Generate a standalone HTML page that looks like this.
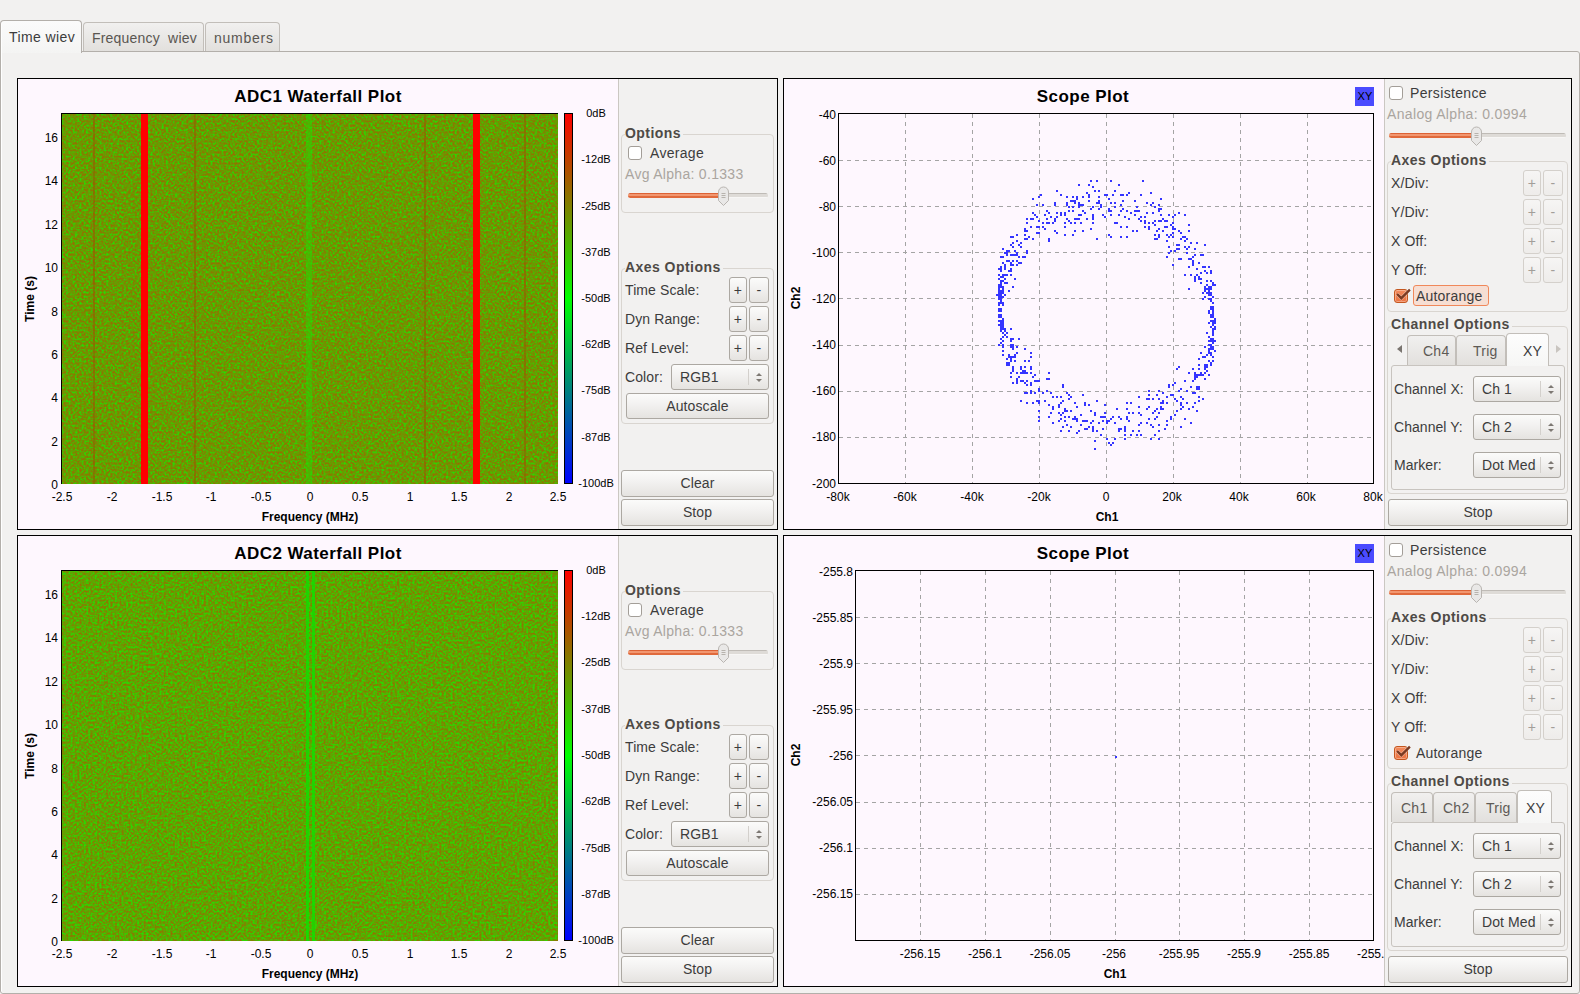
<!DOCTYPE html><html><head><meta charset="utf-8"><title>GNU Radio</title><style>
html,body{margin:0;padding:0;}
body{width:1580px;height:994px;overflow:hidden;position:relative;background:#f2f1f0;font-family:"Liberation Sans",sans-serif;}
.a{position:absolute;box-sizing:border-box;}
.t{position:absolute;white-space:nowrap;font-family:"Liberation Sans",sans-serif;}
.btn{border:1px solid #aca8a2;border-radius:3px;background:linear-gradient(#fbfbfa,#f3f2f1 40%,#e5e3e0);text-align:center;color:#3c3c3c;font-family:"Liberation Sans",sans-serif;white-space:nowrap;}
.btn.dis{border-color:#d4d0cb;color:#a29e99;background:linear-gradient(#f6f5f4,#eeecea);}
.combo{border:1px solid #aca8a2;border-radius:3px;background:linear-gradient(#fbfbfa,#f3f2f1 40%,#e5e3e0);font-family:"Liberation Sans",sans-serif;font-size:14px;color:#3c3c3c;}
.ctext{position:absolute;left:8px;top:0;letter-spacing:0.1px;white-space:nowrap;}
.csep{position:absolute;right:19px;top:4px;bottom:4px;width:1px;background:#d3d0cc;}
.cup{position:absolute;right:6px;top:8px;width:0;height:0;border-left:3.5px solid transparent;border-right:3.5px solid transparent;border-bottom:3.5px solid #7d7873;}
.cdn{position:absolute;right:6px;bottom:7px;width:0;height:0;border-left:3.5px solid transparent;border-right:3.5px solid transparent;border-top:3.5px solid #7d7873;}
.chk{width:14px;height:14px;border:1px solid #a39e98;border-radius:3px;background:#fff;}
.chk.on{background:linear-gradient(#f28a5c,#ec7342);border-color:#c4571f;box-shadow:inset 0 0 0 1px rgba(255,220,200,0.45);}
.tabsel{border:1px solid #c2beb9;border-bottom:none;border-radius:4px 4px 0 0;background:linear-gradient(#fdfdfd,#f6f6f5);}
.tabun{border:1px solid #c2beb9;border-bottom:none;border-radius:4px 4px 0 0;background:linear-gradient(#f1f0ef,#e2e0dd);}
</style></head><body>
<svg width="0" height="0" style="position:absolute"><defs>
<filter id="nz1" x="0" y="0" width="100%" height="100%" color-interpolation-filters="sRGB">
<feTurbulence type="fractalNoise" baseFrequency="0.45" numOctaves="2" seed="7"/>
<feGaussianBlur stdDeviation="0.45"/>
<feComponentTransfer><feFuncR type="table" tableValues="0 0 0.02 0.08 0.22 0.38 0.6 0.88 1 1 1"/></feComponentTransfer>
<feColorMatrix type="matrix" values="-0.431 0 0 0 0.588  0.431 0 0 0 0.431  0 0 0 0 0  0 0 0 0 1"/>
</filter>
<filter id="nz2" x="0" y="0" width="100%" height="100%" color-interpolation-filters="sRGB">
<feTurbulence type="fractalNoise" baseFrequency="0.45" numOctaves="2" seed="11"/>
<feGaussianBlur stdDeviation="0.45"/>
<feComponentTransfer><feFuncR type="table" tableValues="0 0 0.04 0.14 0.3 0.48 0.7 0.92 1 1 1"/></feComponentTransfer>
<feColorMatrix type="matrix" values="-0.431 0 0 0 0.588  0.431 0 0 0 0.431  0 0 0 0 0  0 0 0 0 1"/>
</filter>
</defs></svg>
<div class="a" style="left:0px;top:51px;width:1580px;height:943px;border:1px solid #b3afaa;border-radius:0 3px 3px 3px;background:#f2f1f0;box-shadow:inset 1px 0 0 #fff;"></div>
<div class="a tabsel" style="left:0px;top:20px;width:82px;height:33px;background:linear-gradient(#fbfbfb,#f4f4f3);border-color:#b3afaa;box-shadow:inset 1px 0 0 #fff;"></div>
<div class="a tabun" style="left:83px;top:22px;width:121px;height:29px;"></div>
<div class="a tabun" style="left:205px;top:22px;width:75px;height:29px;"></div>
<div class="t" style="left:9px;top:30px;font-size:14px;line-height:14px;color:#3c3c3c;letter-spacing:0.4px;">Time wiev</div>
<div class="t" style="left:92px;top:31px;font-size:14px;line-height:14px;color:#5a5651;letter-spacing:0.2px;">Frequency&nbsp; wiev</div>
<div class="t" style="left:214px;top:31px;font-size:14px;line-height:14px;color:#5a5651;letter-spacing:0.75px;">numbers</div>
<div class="a" style="left:17px;top:78px;width:761px;height:452px;border:1px solid #000;background:#fef7fe;"></div>
<div class="a" style="left:618px;top:79px;width:159px;height:450px;background:#f2f1f0;border-left:1px solid #cbc7c2;"></div>
<div class="t" style="left:118px;width:400px;text-align:center;top:88px;font-size:17px;line-height:17px;color:#000;font-weight:bold;letter-spacing:0.45px;">ADC1 Waterfall Plot</div>
<svg class="a" style="left:62px;top:114px" width="496" height="370">
<rect x="0" y="0" width="496" height="370" fill="#708700" filter="url(#nz1)"/>
<rect x="31" y="0" height="370" fill="#9a5a00" opacity="0.6" width="2"/>
<rect x="132" y="0" height="370" fill="#9a5a00" opacity="0.6" width="2"/>
<rect x="362" y="0" height="370" fill="#9a5a00" opacity="0.6" width="2"/>
<rect x="462" y="0" height="370" fill="#9a5a00" opacity="0.6" width="2"/>
<rect x="79" y="0" width="7" height="370" fill="#ff0000"/>
<rect x="411" y="0" width="7" height="370" fill="#ff0000"/>
<rect x="244" y="0" width="6" height="370" fill="#28d800" opacity="0.5"/>
</svg>
<div class="a" style="left:61px;top:113px;width:497px;height:1px;background:#000;"></div>
<div class="a" style="left:61px;top:113px;width:1px;height:371px;background:#000;"></div>
<div class="a" style="left:564px;top:113px;width:9px;height:371px;border:1px solid #000;background:linear-gradient(#ff0000,#00ff00 50%,#0000ff);"></div>
<div class="t" style="left:396px;width:400px;text-align:center;top:108px;font-size:11px;line-height:11px;color:#000;letter-spacing:0px;">0dB</div>
<div class="t" style="left:396px;width:400px;text-align:center;top:154px;font-size:11px;line-height:11px;color:#000;letter-spacing:0px;">-12dB</div>
<div class="t" style="left:396px;width:400px;text-align:center;top:201px;font-size:11px;line-height:11px;color:#000;letter-spacing:0px;">-25dB</div>
<div class="t" style="left:396px;width:400px;text-align:center;top:247px;font-size:11px;line-height:11px;color:#000;letter-spacing:0px;">-37dB</div>
<div class="t" style="left:396px;width:400px;text-align:center;top:293px;font-size:11px;line-height:11px;color:#000;letter-spacing:0px;">-50dB</div>
<div class="t" style="left:396px;width:400px;text-align:center;top:339px;font-size:11px;line-height:11px;color:#000;letter-spacing:0px;">-62dB</div>
<div class="t" style="left:396px;width:400px;text-align:center;top:385px;font-size:11px;line-height:11px;color:#000;letter-spacing:0px;">-75dB</div>
<div class="t" style="left:396px;width:400px;text-align:center;top:432px;font-size:11px;line-height:11px;color:#000;letter-spacing:0px;">-87dB</div>
<div class="t" style="left:396px;width:400px;text-align:center;top:478px;font-size:11px;line-height:11px;color:#000;letter-spacing:0px;">-100dB</div>
<div class="t" style="left:-342px;width:400px;text-align:right;top:479px;font-size:12px;line-height:12px;color:#000;letter-spacing:0px;">0</div>
<div class="t" style="left:-342px;width:400px;text-align:right;top:436px;font-size:12px;line-height:12px;color:#000;letter-spacing:0px;">2</div>
<div class="t" style="left:-342px;width:400px;text-align:right;top:392px;font-size:12px;line-height:12px;color:#000;letter-spacing:0px;">4</div>
<div class="t" style="left:-342px;width:400px;text-align:right;top:349px;font-size:12px;line-height:12px;color:#000;letter-spacing:0px;">6</div>
<div class="t" style="left:-342px;width:400px;text-align:right;top:306px;font-size:12px;line-height:12px;color:#000;letter-spacing:0px;">8</div>
<div class="t" style="left:-342px;width:400px;text-align:right;top:262px;font-size:12px;line-height:12px;color:#000;letter-spacing:0px;">10</div>
<div class="t" style="left:-342px;width:400px;text-align:right;top:219px;font-size:12px;line-height:12px;color:#000;letter-spacing:0px;">12</div>
<div class="t" style="left:-342px;width:400px;text-align:right;top:175px;font-size:12px;line-height:12px;color:#000;letter-spacing:0px;">14</div>
<div class="t" style="left:-342px;width:400px;text-align:right;top:132px;font-size:12px;line-height:12px;color:#000;letter-spacing:0px;">16</div>
<div class="t" style="left:-138px;width:400px;text-align:center;top:491px;font-size:12px;line-height:12px;color:#000;letter-spacing:0px;">-2.5</div>
<div class="t" style="left:-88px;width:400px;text-align:center;top:491px;font-size:12px;line-height:12px;color:#000;letter-spacing:0px;">-2</div>
<div class="t" style="left:-38px;width:400px;text-align:center;top:491px;font-size:12px;line-height:12px;color:#000;letter-spacing:0px;">-1.5</div>
<div class="t" style="left:11px;width:400px;text-align:center;top:491px;font-size:12px;line-height:12px;color:#000;letter-spacing:0px;">-1</div>
<div class="t" style="left:61px;width:400px;text-align:center;top:491px;font-size:12px;line-height:12px;color:#000;letter-spacing:0px;">-0.5</div>
<div class="t" style="left:110px;width:400px;text-align:center;top:491px;font-size:12px;line-height:12px;color:#000;letter-spacing:0px;">0</div>
<div class="t" style="left:160px;width:400px;text-align:center;top:491px;font-size:12px;line-height:12px;color:#000;letter-spacing:0px;">0.5</div>
<div class="t" style="left:210px;width:400px;text-align:center;top:491px;font-size:12px;line-height:12px;color:#000;letter-spacing:0px;">1</div>
<div class="t" style="left:259px;width:400px;text-align:center;top:491px;font-size:12px;line-height:12px;color:#000;letter-spacing:0px;">1.5</div>
<div class="t" style="left:309px;width:400px;text-align:center;top:491px;font-size:12px;line-height:12px;color:#000;letter-spacing:0px;">2</div>
<div class="t" style="left:358px;width:400px;text-align:center;top:491px;font-size:12px;line-height:12px;color:#000;letter-spacing:0px;">2.5</div>
<div class="t" style="left:110px;width:400px;text-align:center;top:511px;font-size:12px;line-height:12px;color:#000;font-weight:bold;letter-spacing:0px;">Frequency (MHz)</div>
<div class="t" style="left:-70px;top:292.5px;width:200px;text-align:center;font-size:12px;line-height:12px;font-weight:bold;letter-spacing:0px;transform:rotate(-90deg);color:#000">Time (s)</div>
<div class="a" style="left:621px;top:134px;width:153px;height:79px;border:1px solid #d9d5d0;border-radius:4px;box-sizing:border-box;"></div>
<div class="t" style="left:625px;top:126px;font-size:14px;line-height:14px;color:#4e4a46;font-weight:bold;letter-spacing:0.45px;"><span style="background:#f2f1f0;padding-right:2px">Options</span></div>
<div class="a chk" style="left:628px;top:146px;"></div>
<div class="t" style="left:650px;top:146px;font-size:14px;line-height:14px;color:#3c3c3c;letter-spacing:0.3px;">Average</div>
<div class="t" style="left:625px;top:167px;font-size:14px;line-height:14px;color:#aaa59f;letter-spacing:0.3px;">Avg Alpha: 0.1333</div>
<div class="a" style="left:628px;top:193px;width:140px;height:5px;border-radius:3px;background:linear-gradient(#bfbbb6 0,#bfbbb6 1px,#dedbd7 1px,#dedbd7 4px,#f7f6f5 4px);box-sizing:border-box"></div>
<div class="a" style="left:628px;top:193px;width:94px;height:5px;border-radius:3px;background:linear-gradient(#dc6235 0,#dc6235 1px,#f2966f 1px,#f2966f 3px,#e06a3c 3px);box-sizing:border-box"></div>
<svg class="a" style="left:717px;top:186px" width="14" height="22"><path d="M1.5 6 A5 5 0 0 1 11.5 6 L11.5 14.5 L6.5 19.5 L1.5 14.5 Z" fill="#e9e8e7" stroke="#b9b5b1" stroke-width="1"/><path d="M4.5 7.5 H8.5 M4.5 9.5 H8.5 M4.5 11.5 H8.5" stroke="#a9a49e" stroke-width="0.8"/></svg>
<div class="a" style="left:621px;top:268px;width:153px;height:156px;border:1px solid #d9d5d0;border-radius:4px;box-sizing:border-box;"></div>
<div class="t" style="left:625px;top:260px;font-size:14px;line-height:14px;color:#4e4a46;font-weight:bold;letter-spacing:0.45px;"><span style="background:#f2f1f0;padding-right:2px">Axes Options</span></div>
<div class="t" style="left:625px;top:283px;font-size:14px;line-height:14px;color:#3c3c3c;letter-spacing:0.1px;">Time Scale:</div>
<div class="a btn" style="left:729px;top:277px;width:18px;height:26px;line-height:24px;font-size:14px;letter-spacing:0.1px">+</div>
<div class="a btn" style="left:749px;top:277px;width:20px;height:26px;line-height:24px;font-size:14px;letter-spacing:0.1px">-</div>
<div class="t" style="left:625px;top:312px;font-size:14px;line-height:14px;color:#3c3c3c;letter-spacing:0.1px;">Dyn Range:</div>
<div class="a btn" style="left:729px;top:306px;width:18px;height:26px;line-height:24px;font-size:14px;letter-spacing:0.1px">+</div>
<div class="a btn" style="left:749px;top:306px;width:20px;height:26px;line-height:24px;font-size:14px;letter-spacing:0.1px">-</div>
<div class="t" style="left:625px;top:341px;font-size:14px;line-height:14px;color:#3c3c3c;letter-spacing:0.1px;">Ref Level:</div>
<div class="a btn" style="left:729px;top:335px;width:18px;height:26px;line-height:24px;font-size:14px;letter-spacing:0.1px">+</div>
<div class="a btn" style="left:749px;top:335px;width:20px;height:26px;line-height:24px;font-size:14px;letter-spacing:0.1px">-</div>
<div class="t" style="left:625px;top:370px;font-size:14px;line-height:14px;color:#3c3c3c;letter-spacing:0.1px;">Color:</div>
<div class="a combo" style="left:671px;top:364px;width:98px;height:26px;"><span class="ctext" style="line-height:24px">RGB1</span><div class="csep"></div><div class="cup"></div><div class="cdn"></div></div>
<div class="a btn" style="left:626px;top:393px;width:143px;height:26px;line-height:24px;font-size:14px;letter-spacing:0.1px">Autoscale</div>
<div class="a btn" style="left:621px;top:470px;width:153px;height:27px;line-height:25px;font-size:14px;letter-spacing:0.1px">Clear</div>
<div class="a btn" style="left:621px;top:499px;width:153px;height:27px;line-height:25px;font-size:14px;letter-spacing:0.1px">Stop</div>
<div class="a" style="left:17px;top:535px;width:761px;height:452px;border:1px solid #000;background:#fef7fe;"></div>
<div class="a" style="left:618px;top:536px;width:159px;height:450px;background:#f2f1f0;border-left:1px solid #cbc7c2;"></div>
<div class="t" style="left:118px;width:400px;text-align:center;top:545px;font-size:17px;line-height:17px;color:#000;font-weight:bold;letter-spacing:0.45px;">ADC2 Waterfall Plot</div>
<svg class="a" style="left:62px;top:571px" width="496" height="370">
<rect x="0" y="0" width="496" height="370" fill="#60a000" filter="url(#nz2)"/>
<rect x="244" y="0" width="3" height="370" fill="#10e000" opacity="0.8"/>
<rect x="250" y="0" width="3" height="370" fill="#10e000" opacity="0.8"/>
</svg>
<div class="a" style="left:61px;top:570px;width:497px;height:1px;background:#000;"></div>
<div class="a" style="left:61px;top:570px;width:1px;height:371px;background:#000;"></div>
<div class="a" style="left:564px;top:570px;width:9px;height:371px;border:1px solid #000;background:linear-gradient(#ff0000,#00ff00 50%,#0000ff);"></div>
<div class="t" style="left:396px;width:400px;text-align:center;top:565px;font-size:11px;line-height:11px;color:#000;letter-spacing:0px;">0dB</div>
<div class="t" style="left:396px;width:400px;text-align:center;top:611px;font-size:11px;line-height:11px;color:#000;letter-spacing:0px;">-12dB</div>
<div class="t" style="left:396px;width:400px;text-align:center;top:657px;font-size:11px;line-height:11px;color:#000;letter-spacing:0px;">-25dB</div>
<div class="t" style="left:396px;width:400px;text-align:center;top:704px;font-size:11px;line-height:11px;color:#000;letter-spacing:0px;">-37dB</div>
<div class="t" style="left:396px;width:400px;text-align:center;top:750px;font-size:11px;line-height:11px;color:#000;letter-spacing:0px;">-50dB</div>
<div class="t" style="left:396px;width:400px;text-align:center;top:796px;font-size:11px;line-height:11px;color:#000;letter-spacing:0px;">-62dB</div>
<div class="t" style="left:396px;width:400px;text-align:center;top:843px;font-size:11px;line-height:11px;color:#000;letter-spacing:0px;">-75dB</div>
<div class="t" style="left:396px;width:400px;text-align:center;top:889px;font-size:11px;line-height:11px;color:#000;letter-spacing:0px;">-87dB</div>
<div class="t" style="left:396px;width:400px;text-align:center;top:935px;font-size:11px;line-height:11px;color:#000;letter-spacing:0px;">-100dB</div>
<div class="t" style="left:-342px;width:400px;text-align:right;top:936px;font-size:12px;line-height:12px;color:#000;letter-spacing:0px;">0</div>
<div class="t" style="left:-342px;width:400px;text-align:right;top:893px;font-size:12px;line-height:12px;color:#000;letter-spacing:0px;">2</div>
<div class="t" style="left:-342px;width:400px;text-align:right;top:849px;font-size:12px;line-height:12px;color:#000;letter-spacing:0px;">4</div>
<div class="t" style="left:-342px;width:400px;text-align:right;top:806px;font-size:12px;line-height:12px;color:#000;letter-spacing:0px;">6</div>
<div class="t" style="left:-342px;width:400px;text-align:right;top:763px;font-size:12px;line-height:12px;color:#000;letter-spacing:0px;">8</div>
<div class="t" style="left:-342px;width:400px;text-align:right;top:719px;font-size:12px;line-height:12px;color:#000;letter-spacing:0px;">10</div>
<div class="t" style="left:-342px;width:400px;text-align:right;top:676px;font-size:12px;line-height:12px;color:#000;letter-spacing:0px;">12</div>
<div class="t" style="left:-342px;width:400px;text-align:right;top:632px;font-size:12px;line-height:12px;color:#000;letter-spacing:0px;">14</div>
<div class="t" style="left:-342px;width:400px;text-align:right;top:589px;font-size:12px;line-height:12px;color:#000;letter-spacing:0px;">16</div>
<div class="t" style="left:-138px;width:400px;text-align:center;top:948px;font-size:12px;line-height:12px;color:#000;letter-spacing:0px;">-2.5</div>
<div class="t" style="left:-88px;width:400px;text-align:center;top:948px;font-size:12px;line-height:12px;color:#000;letter-spacing:0px;">-2</div>
<div class="t" style="left:-38px;width:400px;text-align:center;top:948px;font-size:12px;line-height:12px;color:#000;letter-spacing:0px;">-1.5</div>
<div class="t" style="left:11px;width:400px;text-align:center;top:948px;font-size:12px;line-height:12px;color:#000;letter-spacing:0px;">-1</div>
<div class="t" style="left:61px;width:400px;text-align:center;top:948px;font-size:12px;line-height:12px;color:#000;letter-spacing:0px;">-0.5</div>
<div class="t" style="left:110px;width:400px;text-align:center;top:948px;font-size:12px;line-height:12px;color:#000;letter-spacing:0px;">0</div>
<div class="t" style="left:160px;width:400px;text-align:center;top:948px;font-size:12px;line-height:12px;color:#000;letter-spacing:0px;">0.5</div>
<div class="t" style="left:210px;width:400px;text-align:center;top:948px;font-size:12px;line-height:12px;color:#000;letter-spacing:0px;">1</div>
<div class="t" style="left:259px;width:400px;text-align:center;top:948px;font-size:12px;line-height:12px;color:#000;letter-spacing:0px;">1.5</div>
<div class="t" style="left:309px;width:400px;text-align:center;top:948px;font-size:12px;line-height:12px;color:#000;letter-spacing:0px;">2</div>
<div class="t" style="left:358px;width:400px;text-align:center;top:948px;font-size:12px;line-height:12px;color:#000;letter-spacing:0px;">2.5</div>
<div class="t" style="left:110px;width:400px;text-align:center;top:968px;font-size:12px;line-height:12px;color:#000;font-weight:bold;letter-spacing:0px;">Frequency (MHz)</div>
<div class="t" style="left:-70px;top:749.5px;width:200px;text-align:center;font-size:12px;line-height:12px;font-weight:bold;letter-spacing:0px;transform:rotate(-90deg);color:#000">Time (s)</div>
<div class="a" style="left:621px;top:591px;width:153px;height:79px;border:1px solid #d9d5d0;border-radius:4px;box-sizing:border-box;"></div>
<div class="t" style="left:625px;top:583px;font-size:14px;line-height:14px;color:#4e4a46;font-weight:bold;letter-spacing:0.45px;"><span style="background:#f2f1f0;padding-right:2px">Options</span></div>
<div class="a chk" style="left:628px;top:603px;"></div>
<div class="t" style="left:650px;top:603px;font-size:14px;line-height:14px;color:#3c3c3c;letter-spacing:0.3px;">Average</div>
<div class="t" style="left:625px;top:624px;font-size:14px;line-height:14px;color:#aaa59f;letter-spacing:0.3px;">Avg Alpha: 0.1333</div>
<div class="a" style="left:628px;top:650px;width:140px;height:5px;border-radius:3px;background:linear-gradient(#bfbbb6 0,#bfbbb6 1px,#dedbd7 1px,#dedbd7 4px,#f7f6f5 4px);box-sizing:border-box"></div>
<div class="a" style="left:628px;top:650px;width:94px;height:5px;border-radius:3px;background:linear-gradient(#dc6235 0,#dc6235 1px,#f2966f 1px,#f2966f 3px,#e06a3c 3px);box-sizing:border-box"></div>
<svg class="a" style="left:717px;top:643px" width="14" height="22"><path d="M1.5 6 A5 5 0 0 1 11.5 6 L11.5 14.5 L6.5 19.5 L1.5 14.5 Z" fill="#e9e8e7" stroke="#b9b5b1" stroke-width="1"/><path d="M4.5 7.5 H8.5 M4.5 9.5 H8.5 M4.5 11.5 H8.5" stroke="#a9a49e" stroke-width="0.8"/></svg>
<div class="a" style="left:621px;top:725px;width:153px;height:156px;border:1px solid #d9d5d0;border-radius:4px;box-sizing:border-box;"></div>
<div class="t" style="left:625px;top:717px;font-size:14px;line-height:14px;color:#4e4a46;font-weight:bold;letter-spacing:0.45px;"><span style="background:#f2f1f0;padding-right:2px">Axes Options</span></div>
<div class="t" style="left:625px;top:740px;font-size:14px;line-height:14px;color:#3c3c3c;letter-spacing:0.1px;">Time Scale:</div>
<div class="a btn" style="left:729px;top:734px;width:18px;height:26px;line-height:24px;font-size:14px;letter-spacing:0.1px">+</div>
<div class="a btn" style="left:749px;top:734px;width:20px;height:26px;line-height:24px;font-size:14px;letter-spacing:0.1px">-</div>
<div class="t" style="left:625px;top:769px;font-size:14px;line-height:14px;color:#3c3c3c;letter-spacing:0.1px;">Dyn Range:</div>
<div class="a btn" style="left:729px;top:763px;width:18px;height:26px;line-height:24px;font-size:14px;letter-spacing:0.1px">+</div>
<div class="a btn" style="left:749px;top:763px;width:20px;height:26px;line-height:24px;font-size:14px;letter-spacing:0.1px">-</div>
<div class="t" style="left:625px;top:798px;font-size:14px;line-height:14px;color:#3c3c3c;letter-spacing:0.1px;">Ref Level:</div>
<div class="a btn" style="left:729px;top:792px;width:18px;height:26px;line-height:24px;font-size:14px;letter-spacing:0.1px">+</div>
<div class="a btn" style="left:749px;top:792px;width:20px;height:26px;line-height:24px;font-size:14px;letter-spacing:0.1px">-</div>
<div class="t" style="left:625px;top:827px;font-size:14px;line-height:14px;color:#3c3c3c;letter-spacing:0.1px;">Color:</div>
<div class="a combo" style="left:671px;top:821px;width:98px;height:26px;"><span class="ctext" style="line-height:24px">RGB1</span><div class="csep"></div><div class="cup"></div><div class="cdn"></div></div>
<div class="a btn" style="left:626px;top:850px;width:143px;height:26px;line-height:24px;font-size:14px;letter-spacing:0.1px">Autoscale</div>
<div class="a btn" style="left:621px;top:927px;width:153px;height:27px;line-height:25px;font-size:14px;letter-spacing:0.1px">Clear</div>
<div class="a btn" style="left:621px;top:956px;width:153px;height:27px;line-height:25px;font-size:14px;letter-spacing:0.1px">Stop</div>
<div class="a" style="left:783px;top:78px;width:789px;height:452px;border:1px solid #000;background:#fef7fe;"></div>
<div class="t" style="left:883px;width:400px;text-align:center;top:88px;font-size:17px;line-height:17px;color:#000;font-weight:bold;letter-spacing:0.45px;">Scope Plot</div>
<div class="a" style="left:1355px;top:87px;width:19px;height:19px;background:#4b4bff;"></div>
<div class="t" style="left:1165px;width:400px;text-align:center;top:91px;font-size:11px;line-height:11px;color:#000;letter-spacing:0.2px;">XY</div>
<svg class="a" style="left:838px;top:113px" width="536" height="371"><line x1="67.5" y1="1" x2="67.5" y2="370" stroke="#a4a4a4" stroke-width="1" stroke-dasharray="4 4"/><line x1="134.5" y1="1" x2="134.5" y2="370" stroke="#a4a4a4" stroke-width="1" stroke-dasharray="4 4"/><line x1="201.5" y1="1" x2="201.5" y2="370" stroke="#a4a4a4" stroke-width="1" stroke-dasharray="4 4"/><line x1="268.5" y1="1" x2="268.5" y2="370" stroke="#a4a4a4" stroke-width="1" stroke-dasharray="4 4"/><line x1="335.5" y1="1" x2="335.5" y2="370" stroke="#a4a4a4" stroke-width="1" stroke-dasharray="4 4"/><line x1="402.5" y1="1" x2="402.5" y2="370" stroke="#a4a4a4" stroke-width="1" stroke-dasharray="4 4"/><line x1="469.5" y1="1" x2="469.5" y2="370" stroke="#a4a4a4" stroke-width="1" stroke-dasharray="4 4"/><line x1="1" y1="47.5" x2="535" y2="47.5" stroke="#a4a4a4" stroke-width="1" stroke-dasharray="4 4"/><line x1="1" y1="93.5" x2="535" y2="93.5" stroke="#a4a4a4" stroke-width="1" stroke-dasharray="4 4"/><line x1="1" y1="139.5" x2="535" y2="139.5" stroke="#a4a4a4" stroke-width="1" stroke-dasharray="4 4"/><line x1="1" y1="185.5" x2="535" y2="185.5" stroke="#a4a4a4" stroke-width="1" stroke-dasharray="4 4"/><line x1="1" y1="232.5" x2="535" y2="232.5" stroke="#a4a4a4" stroke-width="1" stroke-dasharray="4 4"/><line x1="1" y1="278.5" x2="535" y2="278.5" stroke="#a4a4a4" stroke-width="1" stroke-dasharray="4 4"/><line x1="1" y1="324.5" x2="535" y2="324.5" stroke="#a4a4a4" stroke-width="1" stroke-dasharray="4 4"/><rect x="0.5" y="0.5" width="535" height="370" fill="none" stroke="#000" stroke-width="1"/><rect x="190" y="247" width="2" height="2" fill="#3535ff"/><rect x="368" y="219" width="2" height="2" fill="#3535ff"/><rect x="370" y="197" width="2" height="2" fill="#3535ff"/><rect x="204" y="279" width="2" height="2" fill="#3535ff"/><rect x="162" y="187" width="2" height="2" fill="#3535ff"/><rect x="172" y="243" width="2" height="2" fill="#3535ff"/><rect x="250" y="83" width="2" height="2" fill="#3535ff"/><rect x="326" y="107" width="2" height="2" fill="#3535ff"/><rect x="188" y="267" width="2" height="2" fill="#3535ff"/><rect x="342" y="295" width="2" height="2" fill="#3535ff"/><rect x="374" y="215" width="2" height="2" fill="#3535ff"/><rect x="370" y="231" width="2" height="2" fill="#3535ff"/><rect x="298" y="93" width="2" height="2" fill="#3535ff"/><rect x="372" y="225" width="2" height="2" fill="#3535ff"/><rect x="198" y="119" width="2" height="2" fill="#3535ff"/><rect x="366" y="183" width="2" height="2" fill="#3535ff"/><rect x="374" y="197" width="2" height="2" fill="#3535ff"/><rect x="228" y="83" width="2" height="2" fill="#3535ff"/><rect x="222" y="101" width="2" height="2" fill="#3535ff"/><rect x="368" y="171" width="2" height="2" fill="#3535ff"/><rect x="268" y="307" width="2" height="2" fill="#3535ff"/><rect x="292" y="321" width="2" height="2" fill="#3535ff"/><rect x="374" y="207" width="2" height="2" fill="#3535ff"/><rect x="370" y="261" width="2" height="2" fill="#3535ff"/><rect x="366" y="251" width="2" height="2" fill="#3535ff"/><rect x="200" y="107" width="2" height="2" fill="#3535ff"/><rect x="350" y="117" width="2" height="2" fill="#3535ff"/><rect x="338" y="297" width="2" height="2" fill="#3535ff"/><rect x="356" y="165" width="2" height="2" fill="#3535ff"/><rect x="360" y="287" width="2" height="2" fill="#3535ff"/><rect x="164" y="233" width="2" height="2" fill="#3535ff"/><rect x="316" y="111" width="2" height="2" fill="#3535ff"/><rect x="228" y="297" width="2" height="2" fill="#3535ff"/><rect x="370" y="175" width="2" height="2" fill="#3535ff"/><rect x="178" y="151" width="2" height="2" fill="#3535ff"/><rect x="316" y="305" width="2" height="2" fill="#3535ff"/><rect x="368" y="171" width="2" height="2" fill="#3535ff"/><rect x="160" y="181" width="2" height="2" fill="#3535ff"/><rect x="256" y="301" width="2" height="2" fill="#3535ff"/><rect x="294" y="317" width="2" height="2" fill="#3535ff"/><rect x="332" y="111" width="2" height="2" fill="#3535ff"/><rect x="168" y="161" width="2" height="2" fill="#3535ff"/><rect x="372" y="231" width="2" height="2" fill="#3535ff"/><rect x="252" y="309" width="2" height="2" fill="#3535ff"/><rect x="180" y="143" width="2" height="2" fill="#3535ff"/><rect x="376" y="213" width="2" height="2" fill="#3535ff"/><rect x="160" y="197" width="2" height="2" fill="#3535ff"/><rect x="252" y="67" width="2" height="2" fill="#3535ff"/><rect x="198" y="91" width="2" height="2" fill="#3535ff"/><rect x="230" y="281" width="2" height="2" fill="#3535ff"/><rect x="198" y="103" width="2" height="2" fill="#3535ff"/><rect x="162" y="163" width="2" height="2" fill="#3535ff"/><rect x="240" y="89" width="2" height="2" fill="#3535ff"/><rect x="176" y="247" width="2" height="2" fill="#3535ff"/><rect x="266" y="81" width="2" height="2" fill="#3535ff"/><rect x="310" y="285" width="2" height="2" fill="#3535ff"/><rect x="204" y="91" width="2" height="2" fill="#3535ff"/><rect x="316" y="321" width="2" height="2" fill="#3535ff"/><rect x="340" y="253" width="2" height="2" fill="#3535ff"/><rect x="370" y="237" width="2" height="2" fill="#3535ff"/><rect x="322" y="85" width="2" height="2" fill="#3535ff"/><rect x="162" y="157" width="2" height="2" fill="#3535ff"/><rect x="256" y="327" width="2" height="2" fill="#3535ff"/><rect x="174" y="233" width="2" height="2" fill="#3535ff"/><rect x="192" y="253" width="2" height="2" fill="#3535ff"/><rect x="248" y="307" width="2" height="2" fill="#3535ff"/><rect x="168" y="147" width="2" height="2" fill="#3535ff"/><rect x="226" y="295" width="2" height="2" fill="#3535ff"/><rect x="162" y="177" width="2" height="2" fill="#3535ff"/><rect x="338" y="135" width="2" height="2" fill="#3535ff"/><rect x="306" y="107" width="2" height="2" fill="#3535ff"/><rect x="188" y="109" width="2" height="2" fill="#3535ff"/><rect x="276" y="93" width="2" height="2" fill="#3535ff"/><rect x="178" y="147" width="2" height="2" fill="#3535ff"/><rect x="348" y="125" width="2" height="2" fill="#3535ff"/><rect x="372" y="181" width="2" height="2" fill="#3535ff"/><rect x="164" y="237" width="2" height="2" fill="#3535ff"/><rect x="372" y="225" width="2" height="2" fill="#3535ff"/><rect x="308" y="295" width="2" height="2" fill="#3535ff"/><rect x="334" y="113" width="2" height="2" fill="#3535ff"/><rect x="372" y="235" width="2" height="2" fill="#3535ff"/><rect x="204" y="109" width="2" height="2" fill="#3535ff"/><rect x="350" y="133" width="2" height="2" fill="#3535ff"/><rect x="334" y="103" width="2" height="2" fill="#3535ff"/><rect x="190" y="123" width="2" height="2" fill="#3535ff"/><rect x="240" y="93" width="2" height="2" fill="#3535ff"/><rect x="372" y="227" width="2" height="2" fill="#3535ff"/><rect x="262" y="91" width="2" height="2" fill="#3535ff"/><rect x="174" y="173" width="2" height="2" fill="#3535ff"/><rect x="160" y="201" width="2" height="2" fill="#3535ff"/><rect x="344" y="123" width="2" height="2" fill="#3535ff"/><rect x="240" y="71" width="2" height="2" fill="#3535ff"/><rect x="374" y="199" width="2" height="2" fill="#3535ff"/><rect x="366" y="243" width="2" height="2" fill="#3535ff"/><rect x="258" y="125" width="2" height="2" fill="#3535ff"/><rect x="238" y="85" width="2" height="2" fill="#3535ff"/><rect x="200" y="267" width="2" height="2" fill="#3535ff"/><rect x="346" y="123" width="2" height="2" fill="#3535ff"/><rect x="162" y="225" width="2" height="2" fill="#3535ff"/><rect x="162" y="215" width="2" height="2" fill="#3535ff"/><rect x="264" y="307" width="2" height="2" fill="#3535ff"/><rect x="264" y="101" width="2" height="2" fill="#3535ff"/><rect x="348" y="277" width="2" height="2" fill="#3535ff"/><rect x="286" y="317" width="2" height="2" fill="#3535ff"/><rect x="238" y="293" width="2" height="2" fill="#3535ff"/><rect x="358" y="275" width="2" height="2" fill="#3535ff"/><rect x="332" y="303" width="2" height="2" fill="#3535ff"/><rect x="320" y="311" width="2" height="2" fill="#3535ff"/><rect x="230" y="303" width="2" height="2" fill="#3535ff"/><rect x="288" y="305" width="2" height="2" fill="#3535ff"/><rect x="160" y="173" width="2" height="2" fill="#3535ff"/><rect x="216" y="117" width="2" height="2" fill="#3535ff"/><rect x="308" y="309" width="2" height="2" fill="#3535ff"/><rect x="314" y="285" width="2" height="2" fill="#3535ff"/><rect x="372" y="157" width="2" height="2" fill="#3535ff"/><rect x="374" y="207" width="2" height="2" fill="#3535ff"/><rect x="326" y="315" width="2" height="2" fill="#3535ff"/><rect x="370" y="235" width="2" height="2" fill="#3535ff"/><rect x="240" y="91" width="2" height="2" fill="#3535ff"/><rect x="184" y="267" width="2" height="2" fill="#3535ff"/><rect x="192" y="271" width="2" height="2" fill="#3535ff"/><rect x="190" y="123" width="2" height="2" fill="#3535ff"/><rect x="172" y="215" width="2" height="2" fill="#3535ff"/><rect x="338" y="131" width="2" height="2" fill="#3535ff"/><rect x="178" y="259" width="2" height="2" fill="#3535ff"/><rect x="194" y="125" width="2" height="2" fill="#3535ff"/><rect x="328" y="107" width="2" height="2" fill="#3535ff"/><rect x="356" y="261" width="2" height="2" fill="#3535ff"/><rect x="258" y="89" width="2" height="2" fill="#3535ff"/><rect x="268" y="309" width="2" height="2" fill="#3535ff"/><rect x="276" y="109" width="2" height="2" fill="#3535ff"/><rect x="314" y="89" width="2" height="2" fill="#3535ff"/><rect x="360" y="149" width="2" height="2" fill="#3535ff"/><rect x="342" y="125" width="2" height="2" fill="#3535ff"/><rect x="344" y="285" width="2" height="2" fill="#3535ff"/><rect x="300" y="311" width="2" height="2" fill="#3535ff"/><rect x="370" y="199" width="2" height="2" fill="#3535ff"/><rect x="222" y="301" width="2" height="2" fill="#3535ff"/><rect x="372" y="207" width="2" height="2" fill="#3535ff"/><rect x="336" y="115" width="2" height="2" fill="#3535ff"/><rect x="276" y="109" width="2" height="2" fill="#3535ff"/><rect x="204" y="113" width="2" height="2" fill="#3535ff"/><rect x="318" y="281" width="2" height="2" fill="#3535ff"/><rect x="170" y="137" width="2" height="2" fill="#3535ff"/><rect x="176" y="243" width="2" height="2" fill="#3535ff"/><rect x="182" y="129" width="2" height="2" fill="#3535ff"/><rect x="302" y="107" width="2" height="2" fill="#3535ff"/><rect x="162" y="179" width="2" height="2" fill="#3535ff"/><rect x="164" y="161" width="2" height="2" fill="#3535ff"/><rect x="170" y="147" width="2" height="2" fill="#3535ff"/><rect x="328" y="127" width="2" height="2" fill="#3535ff"/><rect x="188" y="117" width="2" height="2" fill="#3535ff"/><rect x="264" y="101" width="2" height="2" fill="#3535ff"/><rect x="242" y="109" width="2" height="2" fill="#3535ff"/><rect x="374" y="183" width="2" height="2" fill="#3535ff"/><rect x="366" y="233" width="2" height="2" fill="#3535ff"/><rect x="162" y="171" width="2" height="2" fill="#3535ff"/><rect x="214" y="309" width="2" height="2" fill="#3535ff"/><rect x="254" y="315" width="2" height="2" fill="#3535ff"/><rect x="374" y="199" width="2" height="2" fill="#3535ff"/><rect x="182" y="129" width="2" height="2" fill="#3535ff"/><rect x="226" y="99" width="2" height="2" fill="#3535ff"/><rect x="256" y="299" width="2" height="2" fill="#3535ff"/><rect x="272" y="67" width="2" height="2" fill="#3535ff"/><rect x="200" y="297" width="2" height="2" fill="#3535ff"/><rect x="376" y="215" width="2" height="2" fill="#3535ff"/><rect x="178" y="141" width="2" height="2" fill="#3535ff"/><rect x="374" y="215" width="2" height="2" fill="#3535ff"/><rect x="358" y="161" width="2" height="2" fill="#3535ff"/><rect x="160" y="185" width="2" height="2" fill="#3535ff"/><rect x="272" y="97" width="2" height="2" fill="#3535ff"/><rect x="366" y="183" width="2" height="2" fill="#3535ff"/><rect x="230" y="97" width="2" height="2" fill="#3535ff"/><rect x="374" y="243" width="2" height="2" fill="#3535ff"/><rect x="180" y="131" width="2" height="2" fill="#3535ff"/><rect x="226" y="109" width="2" height="2" fill="#3535ff"/><rect x="360" y="245" width="2" height="2" fill="#3535ff"/><rect x="292" y="99" width="2" height="2" fill="#3535ff"/><rect x="160" y="177" width="2" height="2" fill="#3535ff"/><rect x="192" y="243" width="2" height="2" fill="#3535ff"/><rect x="228" y="105" width="2" height="2" fill="#3535ff"/><rect x="286" y="103" width="2" height="2" fill="#3535ff"/><rect x="358" y="129" width="2" height="2" fill="#3535ff"/><rect x="226" y="101" width="2" height="2" fill="#3535ff"/><rect x="272" y="101" width="2" height="2" fill="#3535ff"/><rect x="172" y="247" width="2" height="2" fill="#3535ff"/><rect x="236" y="303" width="2" height="2" fill="#3535ff"/><rect x="244" y="97" width="2" height="2" fill="#3535ff"/><rect x="172" y="161" width="2" height="2" fill="#3535ff"/><rect x="168" y="219" width="2" height="2" fill="#3535ff"/><rect x="274" y="303" width="2" height="2" fill="#3535ff"/><rect x="310" y="277" width="2" height="2" fill="#3535ff"/><rect x="252" y="297" width="2" height="2" fill="#3535ff"/><rect x="308" y="309" width="2" height="2" fill="#3535ff"/><rect x="366" y="175" width="2" height="2" fill="#3535ff"/><rect x="220" y="299" width="2" height="2" fill="#3535ff"/><rect x="276" y="309" width="2" height="2" fill="#3535ff"/><rect x="370" y="185" width="2" height="2" fill="#3535ff"/><rect x="336" y="285" width="2" height="2" fill="#3535ff"/><rect x="280" y="101" width="2" height="2" fill="#3535ff"/><rect x="218" y="103" width="2" height="2" fill="#3535ff"/><rect x="318" y="295" width="2" height="2" fill="#3535ff"/><rect x="164" y="231" width="2" height="2" fill="#3535ff"/><rect x="168" y="147" width="2" height="2" fill="#3535ff"/><rect x="346" y="161" width="2" height="2" fill="#3535ff"/><rect x="162" y="171" width="2" height="2" fill="#3535ff"/><rect x="280" y="303" width="2" height="2" fill="#3535ff"/><rect x="372" y="227" width="2" height="2" fill="#3535ff"/><rect x="310" y="305" width="2" height="2" fill="#3535ff"/><rect x="374" y="229" width="2" height="2" fill="#3535ff"/><rect x="162" y="171" width="2" height="2" fill="#3535ff"/><rect x="290" y="105" width="2" height="2" fill="#3535ff"/><rect x="168" y="251" width="2" height="2" fill="#3535ff"/><rect x="272" y="101" width="2" height="2" fill="#3535ff"/><rect x="374" y="201" width="2" height="2" fill="#3535ff"/><rect x="188" y="271" width="2" height="2" fill="#3535ff"/><rect x="320" y="299" width="2" height="2" fill="#3535ff"/><rect x="320" y="123" width="2" height="2" fill="#3535ff"/><rect x="354" y="293" width="2" height="2" fill="#3535ff"/><rect x="218" y="77" width="2" height="2" fill="#3535ff"/><rect x="192" y="259" width="2" height="2" fill="#3535ff"/><rect x="372" y="201" width="2" height="2" fill="#3535ff"/><rect x="310" y="113" width="2" height="2" fill="#3535ff"/><rect x="372" y="203" width="2" height="2" fill="#3535ff"/><rect x="162" y="163" width="2" height="2" fill="#3535ff"/><rect x="374" y="195" width="2" height="2" fill="#3535ff"/><rect x="230" y="285" width="2" height="2" fill="#3535ff"/><rect x="298" y="321" width="2" height="2" fill="#3535ff"/><rect x="220" y="293" width="2" height="2" fill="#3535ff"/><rect x="362" y="165" width="2" height="2" fill="#3535ff"/><rect x="174" y="225" width="2" height="2" fill="#3535ff"/><rect x="230" y="93" width="2" height="2" fill="#3535ff"/><rect x="246" y="315" width="2" height="2" fill="#3535ff"/><rect x="218" y="283" width="2" height="2" fill="#3535ff"/><rect x="228" y="279" width="2" height="2" fill="#3535ff"/><rect x="186" y="279" width="2" height="2" fill="#3535ff"/><rect x="352" y="309" width="2" height="2" fill="#3535ff"/><rect x="164" y="223" width="2" height="2" fill="#3535ff"/><rect x="186" y="143" width="2" height="2" fill="#3535ff"/><rect x="356" y="263" width="2" height="2" fill="#3535ff"/><rect x="188" y="137" width="2" height="2" fill="#3535ff"/><rect x="166" y="215" width="2" height="2" fill="#3535ff"/><rect x="348" y="289" width="2" height="2" fill="#3535ff"/><rect x="254" y="73" width="2" height="2" fill="#3535ff"/><rect x="320" y="95" width="2" height="2" fill="#3535ff"/><rect x="286" y="103" width="2" height="2" fill="#3535ff"/><rect x="320" y="285" width="2" height="2" fill="#3535ff"/><rect x="174" y="147" width="2" height="2" fill="#3535ff"/><rect x="356" y="279" width="2" height="2" fill="#3535ff"/><rect x="184" y="259" width="2" height="2" fill="#3535ff"/><rect x="374" y="201" width="2" height="2" fill="#3535ff"/><rect x="182" y="267" width="2" height="2" fill="#3535ff"/><rect x="178" y="239" width="2" height="2" fill="#3535ff"/><rect x="254" y="313" width="2" height="2" fill="#3535ff"/><rect x="322" y="295" width="2" height="2" fill="#3535ff"/><rect x="330" y="271" width="2" height="2" fill="#3535ff"/><rect x="280" y="71" width="2" height="2" fill="#3535ff"/><rect x="162" y="181" width="2" height="2" fill="#3535ff"/><rect x="328" y="121" width="2" height="2" fill="#3535ff"/><rect x="188" y="279" width="2" height="2" fill="#3535ff"/><rect x="258" y="287" width="2" height="2" fill="#3535ff"/><rect x="246" y="289" width="2" height="2" fill="#3535ff"/><rect x="192" y="269" width="2" height="2" fill="#3535ff"/><rect x="354" y="147" width="2" height="2" fill="#3535ff"/><rect x="190" y="123" width="2" height="2" fill="#3535ff"/><rect x="264" y="315" width="2" height="2" fill="#3535ff"/><rect x="164" y="227" width="2" height="2" fill="#3535ff"/><rect x="178" y="269" width="2" height="2" fill="#3535ff"/><rect x="162" y="181" width="2" height="2" fill="#3535ff"/><rect x="364" y="141" width="2" height="2" fill="#3535ff"/><rect x="238" y="105" width="2" height="2" fill="#3535ff"/><rect x="202" y="81" width="2" height="2" fill="#3535ff"/><rect x="188" y="137" width="2" height="2" fill="#3535ff"/><rect x="232" y="283" width="2" height="2" fill="#3535ff"/><rect x="236" y="117" width="2" height="2" fill="#3535ff"/><rect x="162" y="209" width="2" height="2" fill="#3535ff"/><rect x="276" y="89" width="2" height="2" fill="#3535ff"/><rect x="254" y="101" width="2" height="2" fill="#3535ff"/><rect x="374" y="217" width="2" height="2" fill="#3535ff"/><rect x="366" y="259" width="2" height="2" fill="#3535ff"/><rect x="310" y="305" width="2" height="2" fill="#3535ff"/><rect x="200" y="113" width="2" height="2" fill="#3535ff"/><rect x="164" y="175" width="2" height="2" fill="#3535ff"/><rect x="370" y="209" width="2" height="2" fill="#3535ff"/><rect x="166" y="155" width="2" height="2" fill="#3535ff"/><rect x="250" y="87" width="2" height="2" fill="#3535ff"/><rect x="162" y="201" width="2" height="2" fill="#3535ff"/><rect x="286" y="315" width="2" height="2" fill="#3535ff"/><rect x="354" y="255" width="2" height="2" fill="#3535ff"/><rect x="374" y="189" width="2" height="2" fill="#3535ff"/><rect x="178" y="121" width="2" height="2" fill="#3535ff"/><rect x="358" y="297" width="2" height="2" fill="#3535ff"/><rect x="272" y="305" width="2" height="2" fill="#3535ff"/><rect x="286" y="325" width="2" height="2" fill="#3535ff"/><rect x="374" y="227" width="2" height="2" fill="#3535ff"/><rect x="252" y="95" width="2" height="2" fill="#3535ff"/><rect x="214" y="295" width="2" height="2" fill="#3535ff"/><rect x="166" y="169" width="2" height="2" fill="#3535ff"/><rect x="354" y="267" width="2" height="2" fill="#3535ff"/><rect x="374" y="169" width="2" height="2" fill="#3535ff"/><rect x="180" y="263" width="2" height="2" fill="#3535ff"/><rect x="362" y="259" width="2" height="2" fill="#3535ff"/><rect x="310" y="109" width="2" height="2" fill="#3535ff"/><rect x="268" y="325" width="2" height="2" fill="#3535ff"/><rect x="326" y="113" width="2" height="2" fill="#3535ff"/><rect x="236" y="305" width="2" height="2" fill="#3535ff"/><rect x="200" y="289" width="2" height="2" fill="#3535ff"/><rect x="160" y="161" width="2" height="2" fill="#3535ff"/><rect x="272" y="89" width="2" height="2" fill="#3535ff"/><rect x="164" y="215" width="2" height="2" fill="#3535ff"/><rect x="162" y="177" width="2" height="2" fill="#3535ff"/><rect x="280" y="317" width="2" height="2" fill="#3535ff"/><rect x="186" y="259" width="2" height="2" fill="#3535ff"/><rect x="162" y="195" width="2" height="2" fill="#3535ff"/><rect x="208" y="109" width="2" height="2" fill="#3535ff"/><rect x="164" y="135" width="2" height="2" fill="#3535ff"/><rect x="192" y="113" width="2" height="2" fill="#3535ff"/><rect x="370" y="239" width="2" height="2" fill="#3535ff"/><rect x="234" y="121" width="2" height="2" fill="#3535ff"/><rect x="360" y="165" width="2" height="2" fill="#3535ff"/><rect x="160" y="231" width="2" height="2" fill="#3535ff"/><rect x="234" y="87" width="2" height="2" fill="#3535ff"/><rect x="336" y="137" width="2" height="2" fill="#3535ff"/><rect x="170" y="251" width="2" height="2" fill="#3535ff"/><rect x="368" y="175" width="2" height="2" fill="#3535ff"/><rect x="334" y="119" width="2" height="2" fill="#3535ff"/><rect x="250" y="71" width="2" height="2" fill="#3535ff"/><rect x="260" y="77" width="2" height="2" fill="#3535ff"/><rect x="186" y="117" width="2" height="2" fill="#3535ff"/><rect x="260" y="83" width="2" height="2" fill="#3535ff"/><rect x="354" y="279" width="2" height="2" fill="#3535ff"/><rect x="368" y="159" width="2" height="2" fill="#3535ff"/><rect x="376" y="209" width="2" height="2" fill="#3535ff"/><rect x="160" y="185" width="2" height="2" fill="#3535ff"/><rect x="178" y="265" width="2" height="2" fill="#3535ff"/><rect x="186" y="257" width="2" height="2" fill="#3535ff"/><rect x="370" y="247" width="2" height="2" fill="#3535ff"/><rect x="224" y="299" width="2" height="2" fill="#3535ff"/><rect x="162" y="143" width="2" height="2" fill="#3535ff"/><rect x="250" y="313" width="2" height="2" fill="#3535ff"/><rect x="328" y="311" width="2" height="2" fill="#3535ff"/><rect x="262" y="93" width="2" height="2" fill="#3535ff"/><rect x="270" y="307" width="2" height="2" fill="#3535ff"/><rect x="164" y="177" width="2" height="2" fill="#3535ff"/><rect x="260" y="89" width="2" height="2" fill="#3535ff"/><rect x="358" y="155" width="2" height="2" fill="#3535ff"/><rect x="172" y="131" width="2" height="2" fill="#3535ff"/><rect x="316" y="121" width="2" height="2" fill="#3535ff"/><rect x="226" y="303" width="2" height="2" fill="#3535ff"/><rect x="360" y="273" width="2" height="2" fill="#3535ff"/><rect x="158" y="181" width="2" height="2" fill="#3535ff"/><rect x="166" y="217" width="2" height="2" fill="#3535ff"/><rect x="290" y="299" width="2" height="2" fill="#3535ff"/><rect x="350" y="153" width="2" height="2" fill="#3535ff"/><rect x="350" y="295" width="2" height="2" fill="#3535ff"/><rect x="200" y="277" width="2" height="2" fill="#3535ff"/><rect x="280" y="315" width="2" height="2" fill="#3535ff"/><rect x="196" y="261" width="2" height="2" fill="#3535ff"/><rect x="370" y="175" width="2" height="2" fill="#3535ff"/><rect x="198" y="267" width="2" height="2" fill="#3535ff"/><rect x="178" y="139" width="2" height="2" fill="#3535ff"/><rect x="366" y="153" width="2" height="2" fill="#3535ff"/><rect x="342" y="291" width="2" height="2" fill="#3535ff"/><rect x="314" y="99" width="2" height="2" fill="#3535ff"/><rect x="352" y="273" width="2" height="2" fill="#3535ff"/><rect x="176" y="141" width="2" height="2" fill="#3535ff"/><rect x="170" y="241" width="2" height="2" fill="#3535ff"/><rect x="162" y="187" width="2" height="2" fill="#3535ff"/><rect x="164" y="183" width="2" height="2" fill="#3535ff"/><rect x="348" y="135" width="2" height="2" fill="#3535ff"/><rect x="374" y="215" width="2" height="2" fill="#3535ff"/><rect x="250" y="81" width="2" height="2" fill="#3535ff"/><rect x="172" y="161" width="2" height="2" fill="#3535ff"/><rect x="360" y="275" width="2" height="2" fill="#3535ff"/><rect x="360" y="283" width="2" height="2" fill="#3535ff"/><rect x="162" y="215" width="2" height="2" fill="#3535ff"/><rect x="366" y="253" width="2" height="2" fill="#3535ff"/><rect x="360" y="255" width="2" height="2" fill="#3535ff"/><rect x="244" y="83" width="2" height="2" fill="#3535ff"/><rect x="162" y="155" width="2" height="2" fill="#3535ff"/><rect x="340" y="145" width="2" height="2" fill="#3535ff"/><rect x="256" y="335" width="2" height="2" fill="#3535ff"/><rect x="340" y="131" width="2" height="2" fill="#3535ff"/><rect x="166" y="139" width="2" height="2" fill="#3535ff"/><rect x="322" y="107" width="2" height="2" fill="#3535ff"/><rect x="174" y="257" width="2" height="2" fill="#3535ff"/><rect x="368" y="167" width="2" height="2" fill="#3535ff"/><rect x="276" y="325" width="2" height="2" fill="#3535ff"/><rect x="196" y="279" width="2" height="2" fill="#3535ff"/><rect x="360" y="273" width="2" height="2" fill="#3535ff"/><rect x="344" y="293" width="2" height="2" fill="#3535ff"/><rect x="176" y="137" width="2" height="2" fill="#3535ff"/><rect x="208" y="265" width="2" height="2" fill="#3535ff"/><rect x="376" y="205" width="2" height="2" fill="#3535ff"/><rect x="332" y="281" width="2" height="2" fill="#3535ff"/><rect x="324" y="287" width="2" height="2" fill="#3535ff"/><rect x="254" y="307" width="2" height="2" fill="#3535ff"/><rect x="188" y="259" width="2" height="2" fill="#3535ff"/><rect x="162" y="189" width="2" height="2" fill="#3535ff"/><rect x="282" y="305" width="2" height="2" fill="#3535ff"/><rect x="162" y="217" width="2" height="2" fill="#3535ff"/><rect x="300" y="97" width="2" height="2" fill="#3535ff"/><rect x="276" y="77" width="2" height="2" fill="#3535ff"/><rect x="186" y="115" width="2" height="2" fill="#3535ff"/><rect x="254" y="93" width="2" height="2" fill="#3535ff"/><rect x="174" y="231" width="2" height="2" fill="#3535ff"/><rect x="168" y="169" width="2" height="2" fill="#3535ff"/><rect x="192" y="105" width="2" height="2" fill="#3535ff"/><rect x="166" y="151" width="2" height="2" fill="#3535ff"/><rect x="260" y="87" width="2" height="2" fill="#3535ff"/><rect x="370" y="173" width="2" height="2" fill="#3535ff"/><rect x="350" y="145" width="2" height="2" fill="#3535ff"/><rect x="302" y="309" width="2" height="2" fill="#3535ff"/><rect x="374" y="171" width="2" height="2" fill="#3535ff"/><rect x="192" y="255" width="2" height="2" fill="#3535ff"/><rect x="246" y="291" width="2" height="2" fill="#3535ff"/><rect x="376" y="171" width="2" height="2" fill="#3535ff"/><rect x="300" y="105" width="2" height="2" fill="#3535ff"/><rect x="354" y="149" width="2" height="2" fill="#3535ff"/><rect x="288" y="97" width="2" height="2" fill="#3535ff"/><rect x="234" y="83" width="2" height="2" fill="#3535ff"/><rect x="324" y="105" width="2" height="2" fill="#3535ff"/><rect x="228" y="311" width="2" height="2" fill="#3535ff"/><rect x="166" y="161" width="2" height="2" fill="#3535ff"/><rect x="164" y="143" width="2" height="2" fill="#3535ff"/><rect x="336" y="269" width="2" height="2" fill="#3535ff"/><rect x="342" y="275" width="2" height="2" fill="#3535ff"/><rect x="174" y="123" width="2" height="2" fill="#3535ff"/><rect x="346" y="267" width="2" height="2" fill="#3535ff"/><rect x="306" y="113" width="2" height="2" fill="#3535ff"/><rect x="224" y="287" width="2" height="2" fill="#3535ff"/><rect x="164" y="205" width="2" height="2" fill="#3535ff"/><rect x="356" y="141" width="2" height="2" fill="#3535ff"/><rect x="334" y="123" width="2" height="2" fill="#3535ff"/><rect x="330" y="123" width="2" height="2" fill="#3535ff"/><rect x="372" y="195" width="2" height="2" fill="#3535ff"/><rect x="320" y="325" width="2" height="2" fill="#3535ff"/><rect x="362" y="159" width="2" height="2" fill="#3535ff"/><rect x="366" y="157" width="2" height="2" fill="#3535ff"/><rect x="162" y="163" width="2" height="2" fill="#3535ff"/><rect x="360" y="251" width="2" height="2" fill="#3535ff"/><rect x="318" y="117" width="2" height="2" fill="#3535ff"/><rect x="314" y="313" width="2" height="2" fill="#3535ff"/><rect x="312" y="311" width="2" height="2" fill="#3535ff"/><rect x="288" y="81" width="2" height="2" fill="#3535ff"/><rect x="356" y="135" width="2" height="2" fill="#3535ff"/><rect x="222" y="81" width="2" height="2" fill="#3535ff"/><rect x="228" y="91" width="2" height="2" fill="#3535ff"/><rect x="162" y="215" width="2" height="2" fill="#3535ff"/><rect x="360" y="261" width="2" height="2" fill="#3535ff"/><rect x="160" y="203" width="2" height="2" fill="#3535ff"/><rect x="330" y="133" width="2" height="2" fill="#3535ff"/><rect x="364" y="153" width="2" height="2" fill="#3535ff"/><rect x="242" y="101" width="2" height="2" fill="#3535ff"/><rect x="364" y="261" width="2" height="2" fill="#3535ff"/><rect x="208" y="105" width="2" height="2" fill="#3535ff"/><rect x="210" y="125" width="2" height="2" fill="#3535ff"/><rect x="166" y="181" width="2" height="2" fill="#3535ff"/><rect x="216" y="89" width="2" height="2" fill="#3535ff"/><rect x="342" y="289" width="2" height="2" fill="#3535ff"/><rect x="244" y="117" width="2" height="2" fill="#3535ff"/><rect x="160" y="207" width="2" height="2" fill="#3535ff"/><rect x="328" y="289" width="2" height="2" fill="#3535ff"/><rect x="208" y="277" width="2" height="2" fill="#3535ff"/><rect x="172" y="155" width="2" height="2" fill="#3535ff"/><rect x="344" y="293" width="2" height="2" fill="#3535ff"/><rect x="182" y="255" width="2" height="2" fill="#3535ff"/><rect x="166" y="153" width="2" height="2" fill="#3535ff"/><rect x="350" y="111" width="2" height="2" fill="#3535ff"/><rect x="366" y="173" width="2" height="2" fill="#3535ff"/><rect x="244" y="91" width="2" height="2" fill="#3535ff"/><rect x="164" y="173" width="2" height="2" fill="#3535ff"/><rect x="228" y="297" width="2" height="2" fill="#3535ff"/><rect x="324" y="279" width="2" height="2" fill="#3535ff"/><rect x="314" y="109" width="2" height="2" fill="#3535ff"/><rect x="194" y="289" width="2" height="2" fill="#3535ff"/><rect x="194" y="85" width="2" height="2" fill="#3535ff"/><rect x="366" y="265" width="2" height="2" fill="#3535ff"/><rect x="376" y="227" width="2" height="2" fill="#3535ff"/><rect x="252" y="309" width="2" height="2" fill="#3535ff"/><rect x="316" y="125" width="2" height="2" fill="#3535ff"/><rect x="180" y="149" width="2" height="2" fill="#3535ff"/><rect x="168" y="141" width="2" height="2" fill="#3535ff"/><rect x="246" y="99" width="2" height="2" fill="#3535ff"/><rect x="210" y="303" width="2" height="2" fill="#3535ff"/><rect x="172" y="245" width="2" height="2" fill="#3535ff"/><rect x="286" y="321" width="2" height="2" fill="#3535ff"/><rect x="188" y="289" width="2" height="2" fill="#3535ff"/><rect x="370" y="179" width="2" height="2" fill="#3535ff"/><rect x="162" y="213" width="2" height="2" fill="#3535ff"/><rect x="374" y="209" width="2" height="2" fill="#3535ff"/><rect x="166" y="165" width="2" height="2" fill="#3535ff"/><rect x="306" y="103" width="2" height="2" fill="#3535ff"/><rect x="270" y="95" width="2" height="2" fill="#3535ff"/><rect x="374" y="183" width="2" height="2" fill="#3535ff"/><rect x="322" y="289" width="2" height="2" fill="#3535ff"/><rect x="320" y="115" width="2" height="2" fill="#3535ff"/><rect x="316" y="93" width="2" height="2" fill="#3535ff"/><rect x="374" y="227" width="2" height="2" fill="#3535ff"/><rect x="330" y="273" width="2" height="2" fill="#3535ff"/><rect x="358" y="261" width="2" height="2" fill="#3535ff"/><rect x="172" y="245" width="2" height="2" fill="#3535ff"/><rect x="260" y="95" width="2" height="2" fill="#3535ff"/><rect x="362" y="169" width="2" height="2" fill="#3535ff"/><rect x="368" y="241" width="2" height="2" fill="#3535ff"/><rect x="262" y="303" width="2" height="2" fill="#3535ff"/><rect x="184" y="143" width="2" height="2" fill="#3535ff"/><rect x="334" y="281" width="2" height="2" fill="#3535ff"/><rect x="332" y="121" width="2" height="2" fill="#3535ff"/><rect x="284" y="95" width="2" height="2" fill="#3535ff"/><rect x="282" y="113" width="2" height="2" fill="#3535ff"/><rect x="174" y="269" width="2" height="2" fill="#3535ff"/><rect x="296" y="97" width="2" height="2" fill="#3535ff"/><rect x="178" y="233" width="2" height="2" fill="#3535ff"/><rect x="162" y="171" width="2" height="2" fill="#3535ff"/><rect x="230" y="303" width="2" height="2" fill="#3535ff"/><rect x="162" y="167" width="2" height="2" fill="#3535ff"/><rect x="262" y="321" width="2" height="2" fill="#3535ff"/><rect x="162" y="197" width="2" height="2" fill="#3535ff"/><rect x="166" y="221" width="2" height="2" fill="#3535ff"/><rect x="226" y="113" width="2" height="2" fill="#3535ff"/><rect x="182" y="253" width="2" height="2" fill="#3535ff"/><rect x="166" y="153" width="2" height="2" fill="#3535ff"/><rect x="354" y="143" width="2" height="2" fill="#3535ff"/><rect x="160" y="195" width="2" height="2" fill="#3535ff"/><rect x="254" y="103" width="2" height="2" fill="#3535ff"/><rect x="358" y="273" width="2" height="2" fill="#3535ff"/><rect x="232" y="297" width="2" height="2" fill="#3535ff"/><rect x="282" y="123" width="2" height="2" fill="#3535ff"/><rect x="168" y="169" width="2" height="2" fill="#3535ff"/><rect x="162" y="197" width="2" height="2" fill="#3535ff"/><rect x="246" y="307" width="2" height="2" fill="#3535ff"/><rect x="282" y="305" width="2" height="2" fill="#3535ff"/><rect x="368" y="179" width="2" height="2" fill="#3535ff"/><rect x="216" y="91" width="2" height="2" fill="#3535ff"/><rect x="186" y="253" width="2" height="2" fill="#3535ff"/><rect x="362" y="239" width="2" height="2" fill="#3535ff"/><rect x="238" y="319" width="2" height="2" fill="#3535ff"/><rect x="192" y="277" width="2" height="2" fill="#3535ff"/><rect x="282" y="97" width="2" height="2" fill="#3535ff"/><rect x="250" y="291" width="2" height="2" fill="#3535ff"/><rect x="366" y="255" width="2" height="2" fill="#3535ff"/><rect x="374" y="235" width="2" height="2" fill="#3535ff"/><rect x="372" y="251" width="2" height="2" fill="#3535ff"/><rect x="204" y="279" width="2" height="2" fill="#3535ff"/><rect x="336" y="301" width="2" height="2" fill="#3535ff"/><rect x="186" y="235" width="2" height="2" fill="#3535ff"/><rect x="302" y="301" width="2" height="2" fill="#3535ff"/><rect x="174" y="129" width="2" height="2" fill="#3535ff"/><rect x="270" y="329" width="2" height="2" fill="#3535ff"/><rect x="162" y="197" width="2" height="2" fill="#3535ff"/><rect x="338" y="255" width="2" height="2" fill="#3535ff"/><rect x="160" y="189" width="2" height="2" fill="#3535ff"/><rect x="170" y="243" width="2" height="2" fill="#3535ff"/><rect x="222" y="99" width="2" height="2" fill="#3535ff"/><rect x="308" y="99" width="2" height="2" fill="#3535ff"/><rect x="236" y="87" width="2" height="2" fill="#3535ff"/><rect x="212" y="279" width="2" height="2" fill="#3535ff"/><rect x="162" y="185" width="2" height="2" fill="#3535ff"/><rect x="198" y="113" width="2" height="2" fill="#3535ff"/><rect x="330" y="139" width="2" height="2" fill="#3535ff"/><rect x="366" y="255" width="2" height="2" fill="#3535ff"/><rect x="238" y="83" width="2" height="2" fill="#3535ff"/><rect x="346" y="133" width="2" height="2" fill="#3535ff"/><rect x="334" y="115" width="2" height="2" fill="#3535ff"/><rect x="168" y="137" width="2" height="2" fill="#3535ff"/><rect x="342" y="313" width="2" height="2" fill="#3535ff"/><rect x="372" y="173" width="2" height="2" fill="#3535ff"/><rect x="374" y="247" width="2" height="2" fill="#3535ff"/><rect x="244" y="281" width="2" height="2" fill="#3535ff"/><rect x="374" y="219" width="2" height="2" fill="#3535ff"/><rect x="358" y="263" width="2" height="2" fill="#3535ff"/><rect x="374" y="215" width="2" height="2" fill="#3535ff"/><rect x="360" y="163" width="2" height="2" fill="#3535ff"/><rect x="164" y="191" width="2" height="2" fill="#3535ff"/><rect x="162" y="197" width="2" height="2" fill="#3535ff"/><rect x="270" y="97" width="2" height="2" fill="#3535ff"/><rect x="276" y="93" width="2" height="2" fill="#3535ff"/><rect x="160" y="191" width="2" height="2" fill="#3535ff"/><rect x="162" y="211" width="2" height="2" fill="#3535ff"/><rect x="374" y="199" width="2" height="2" fill="#3535ff"/><rect x="374" y="193" width="2" height="2" fill="#3535ff"/><rect x="278" y="109" width="2" height="2" fill="#3535ff"/><rect x="296" y="87" width="2" height="2" fill="#3535ff"/><rect x="366" y="177" width="2" height="2" fill="#3535ff"/><rect x="172" y="263" width="2" height="2" fill="#3535ff"/><rect x="372" y="159" width="2" height="2" fill="#3535ff"/><rect x="214" y="293" width="2" height="2" fill="#3535ff"/><rect x="322" y="293" width="2" height="2" fill="#3535ff"/><rect x="280" y="101" width="2" height="2" fill="#3535ff"/><rect x="310" y="115" width="2" height="2" fill="#3535ff"/><rect x="352" y="273" width="2" height="2" fill="#3535ff"/><rect x="340" y="117" width="2" height="2" fill="#3535ff"/><rect x="162" y="173" width="2" height="2" fill="#3535ff"/><rect x="372" y="249" width="2" height="2" fill="#3535ff"/><rect x="324" y="289" width="2" height="2" fill="#3535ff"/><rect x="364" y="179" width="2" height="2" fill="#3535ff"/><rect x="358" y="263" width="2" height="2" fill="#3535ff"/><rect x="206" y="115" width="2" height="2" fill="#3535ff"/><rect x="284" y="95" width="2" height="2" fill="#3535ff"/><rect x="254" y="109" width="2" height="2" fill="#3535ff"/><rect x="180" y="225" width="2" height="2" fill="#3535ff"/><rect x="372" y="185" width="2" height="2" fill="#3535ff"/><rect x="302" y="81" width="2" height="2" fill="#3535ff"/><rect x="186" y="269" width="2" height="2" fill="#3535ff"/><rect x="172" y="155" width="2" height="2" fill="#3535ff"/><rect x="352" y="145" width="2" height="2" fill="#3535ff"/><rect x="368" y="253" width="2" height="2" fill="#3535ff"/><rect x="248" y="79" width="2" height="2" fill="#3535ff"/><rect x="320" y="91" width="2" height="2" fill="#3535ff"/><rect x="370" y="181" width="2" height="2" fill="#3535ff"/><rect x="198" y="287" width="2" height="2" fill="#3535ff"/><rect x="232" y="87" width="2" height="2" fill="#3535ff"/><rect x="160" y="171" width="2" height="2" fill="#3535ff"/><rect x="366" y="253" width="2" height="2" fill="#3535ff"/><rect x="364" y="243" width="2" height="2" fill="#3535ff"/><rect x="294" y="299" width="2" height="2" fill="#3535ff"/><rect x="174" y="141" width="2" height="2" fill="#3535ff"/><rect x="226" y="307" width="2" height="2" fill="#3535ff"/><rect x="374" y="195" width="2" height="2" fill="#3535ff"/><rect x="200" y="119" width="2" height="2" fill="#3535ff"/><rect x="356" y="259" width="2" height="2" fill="#3535ff"/><rect x="374" y="233" width="2" height="2" fill="#3535ff"/><rect x="200" y="307" width="2" height="2" fill="#3535ff"/><rect x="184" y="257" width="2" height="2" fill="#3535ff"/><rect x="320" y="317" width="2" height="2" fill="#3535ff"/><rect x="258" y="317" width="2" height="2" fill="#3535ff"/><rect x="218" y="99" width="2" height="2" fill="#3535ff"/><rect x="160" y="165" width="2" height="2" fill="#3535ff"/><rect x="260" y="95" width="2" height="2" fill="#3535ff"/><rect x="172" y="225" width="2" height="2" fill="#3535ff"/><rect x="192" y="239" width="2" height="2" fill="#3535ff"/><rect x="160" y="197" width="2" height="2" fill="#3535ff"/><rect x="194" y="99" width="2" height="2" fill="#3535ff"/><rect x="346" y="127" width="2" height="2" fill="#3535ff"/><rect x="266" y="303" width="2" height="2" fill="#3535ff"/><rect x="172" y="247" width="2" height="2" fill="#3535ff"/><rect x="254" y="313" width="2" height="2" fill="#3535ff"/><rect x="310" y="281" width="2" height="2" fill="#3535ff"/><rect x="188" y="139" width="2" height="2" fill="#3535ff"/><rect x="290" y="79" width="2" height="2" fill="#3535ff"/><rect x="254" y="93" width="2" height="2" fill="#3535ff"/><rect x="292" y="289" width="2" height="2" fill="#3535ff"/><rect x="282" y="81" width="2" height="2" fill="#3535ff"/><rect x="174" y="255" width="2" height="2" fill="#3535ff"/><rect x="164" y="207" width="2" height="2" fill="#3535ff"/><rect x="182" y="259" width="2" height="2" fill="#3535ff"/><rect x="192" y="279" width="2" height="2" fill="#3535ff"/><rect x="224" y="299" width="2" height="2" fill="#3535ff"/><rect x="318" y="125" width="2" height="2" fill="#3535ff"/><rect x="206" y="287" width="2" height="2" fill="#3535ff"/><rect x="218" y="119" width="2" height="2" fill="#3535ff"/><rect x="220" y="307" width="2" height="2" fill="#3535ff"/><rect x="372" y="187" width="2" height="2" fill="#3535ff"/><rect x="346" y="305" width="2" height="2" fill="#3535ff"/><rect x="164" y="209" width="2" height="2" fill="#3535ff"/><rect x="210" y="259" width="2" height="2" fill="#3535ff"/><rect x="210" y="109" width="2" height="2" fill="#3535ff"/><rect x="226" y="307" width="2" height="2" fill="#3535ff"/><rect x="334" y="151" width="2" height="2" fill="#3535ff"/><rect x="160" y="179" width="2" height="2" fill="#3535ff"/><rect x="270" y="121" width="2" height="2" fill="#3535ff"/><rect x="308" y="89" width="2" height="2" fill="#3535ff"/><rect x="222" y="317" width="2" height="2" fill="#3535ff"/><rect x="356" y="265" width="2" height="2" fill="#3535ff"/><rect x="186" y="259" width="2" height="2" fill="#3535ff"/><rect x="332" y="137" width="2" height="2" fill="#3535ff"/><rect x="370" y="177" width="2" height="2" fill="#3535ff"/><rect x="262" y="93" width="2" height="2" fill="#3535ff"/><rect x="168" y="223" width="2" height="2" fill="#3535ff"/><rect x="172" y="243" width="2" height="2" fill="#3535ff"/><rect x="172" y="231" width="2" height="2" fill="#3535ff"/><rect x="316" y="305" width="2" height="2" fill="#3535ff"/><rect x="338" y="287" width="2" height="2" fill="#3535ff"/><rect x="350" y="259" width="2" height="2" fill="#3535ff"/><rect x="234" y="305" width="2" height="2" fill="#3535ff"/><rect x="278" y="295" width="2" height="2" fill="#3535ff"/><rect x="252" y="115" width="2" height="2" fill="#3535ff"/><rect x="164" y="205" width="2" height="2" fill="#3535ff"/><rect x="374" y="233" width="2" height="2" fill="#3535ff"/><rect x="254" y="317" width="2" height="2" fill="#3535ff"/><rect x="224" y="313" width="2" height="2" fill="#3535ff"/><rect x="298" y="117" width="2" height="2" fill="#3535ff"/><rect x="172" y="141" width="2" height="2" fill="#3535ff"/><rect x="360" y="275" width="2" height="2" fill="#3535ff"/><rect x="350" y="175" width="2" height="2" fill="#3535ff"/><rect x="200" y="83" width="2" height="2" fill="#3535ff"/><rect x="232" y="313" width="2" height="2" fill="#3535ff"/><rect x="320" y="123" width="2" height="2" fill="#3535ff"/><rect x="320" y="97" width="2" height="2" fill="#3535ff"/><rect x="240" y="101" width="2" height="2" fill="#3535ff"/><rect x="348" y="139" width="2" height="2" fill="#3535ff"/><rect x="162" y="229" width="2" height="2" fill="#3535ff"/><rect x="258" y="67" width="2" height="2" fill="#3535ff"/><rect x="364" y="285" width="2" height="2" fill="#3535ff"/><rect x="164" y="163" width="2" height="2" fill="#3535ff"/><rect x="164" y="241" width="2" height="2" fill="#3535ff"/><rect x="196" y="101" width="2" height="2" fill="#3535ff"/><rect x="172" y="149" width="2" height="2" fill="#3535ff"/><rect x="174" y="151" width="2" height="2" fill="#3535ff"/><rect x="372" y="213" width="2" height="2" fill="#3535ff"/><rect x="370" y="223" width="2" height="2" fill="#3535ff"/><rect x="184" y="259" width="2" height="2" fill="#3535ff"/><rect x="162" y="167" width="2" height="2" fill="#3535ff"/><rect x="166" y="221" width="2" height="2" fill="#3535ff"/><rect x="210" y="291" width="2" height="2" fill="#3535ff"/><rect x="376" y="209" width="2" height="2" fill="#3535ff"/><rect x="372" y="185" width="2" height="2" fill="#3535ff"/><rect x="316" y="297" width="2" height="2" fill="#3535ff"/><rect x="354" y="151" width="2" height="2" fill="#3535ff"/><rect x="334" y="113" width="2" height="2" fill="#3535ff"/><rect x="320" y="107" width="2" height="2" fill="#3535ff"/><rect x="320" y="277" width="2" height="2" fill="#3535ff"/><rect x="252" y="297" width="2" height="2" fill="#3535ff"/><rect x="172" y="151" width="2" height="2" fill="#3535ff"/><rect x="358" y="275" width="2" height="2" fill="#3535ff"/><rect x="196" y="279" width="2" height="2" fill="#3535ff"/><rect x="174" y="235" width="2" height="2" fill="#3535ff"/><rect x="266" y="103" width="2" height="2" fill="#3535ff"/><rect x="174" y="133" width="2" height="2" fill="#3535ff"/><rect x="248" y="105" width="2" height="2" fill="#3535ff"/><rect x="324" y="117" width="2" height="2" fill="#3535ff"/><rect x="210" y="265" width="2" height="2" fill="#3535ff"/><rect x="178" y="267" width="2" height="2" fill="#3535ff"/><rect x="168" y="245" width="2" height="2" fill="#3535ff"/><rect x="160" y="203" width="2" height="2" fill="#3535ff"/><rect x="322" y="289" width="2" height="2" fill="#3535ff"/><rect x="274" y="81" width="2" height="2" fill="#3535ff"/><rect x="234" y="97" width="2" height="2" fill="#3535ff"/><rect x="194" y="263" width="2" height="2" fill="#3535ff"/><rect x="162" y="211" width="2" height="2" fill="#3535ff"/><rect x="272" y="123" width="2" height="2" fill="#3535ff"/><rect x="332" y="111" width="2" height="2" fill="#3535ff"/><rect x="160" y="189" width="2" height="2" fill="#3535ff"/><rect x="316" y="107" width="2" height="2" fill="#3535ff"/><rect x="334" y="109" width="2" height="2" fill="#3535ff"/><rect x="304" y="67" width="2" height="2" fill="#3535ff"/><rect x="296" y="87" width="2" height="2" fill="#3535ff"/><rect x="372" y="195" width="2" height="2" fill="#3535ff"/><rect x="212" y="299" width="2" height="2" fill="#3535ff"/><rect x="238" y="307" width="2" height="2" fill="#3535ff"/><rect x="376" y="207" width="2" height="2" fill="#3535ff"/><rect x="366" y="131" width="2" height="2" fill="#3535ff"/><rect x="288" y="295" width="2" height="2" fill="#3535ff"/><rect x="196" y="267" width="2" height="2" fill="#3535ff"/><rect x="364" y="185" width="2" height="2" fill="#3535ff"/><rect x="242" y="301" width="2" height="2" fill="#3535ff"/><rect x="352" y="129" width="2" height="2" fill="#3535ff"/><rect x="164" y="189" width="2" height="2" fill="#3535ff"/><rect x="288" y="295" width="2" height="2" fill="#3535ff"/><rect x="160" y="195" width="2" height="2" fill="#3535ff"/><rect x="216" y="107" width="2" height="2" fill="#3535ff"/><rect x="302" y="321" width="2" height="2" fill="#3535ff"/><rect x="312" y="325" width="2" height="2" fill="#3535ff"/><rect x="368" y="257" width="2" height="2" fill="#3535ff"/><rect x="188" y="125" width="2" height="2" fill="#3535ff"/><rect x="334" y="271" width="2" height="2" fill="#3535ff"/><rect x="268" y="81" width="2" height="2" fill="#3535ff"/><rect x="312" y="91" width="2" height="2" fill="#3535ff"/><rect x="284" y="87" width="2" height="2" fill="#3535ff"/><rect x="220" y="291" width="2" height="2" fill="#3535ff"/><rect x="164" y="219" width="2" height="2" fill="#3535ff"/><rect x="164" y="211" width="2" height="2" fill="#3535ff"/><rect x="256" y="77" width="2" height="2" fill="#3535ff"/><rect x="194" y="105" width="2" height="2" fill="#3535ff"/><rect x="286" y="325" width="2" height="2" fill="#3535ff"/><rect x="236" y="105" width="2" height="2" fill="#3535ff"/><rect x="346" y="101" width="2" height="2" fill="#3535ff"/><rect x="176" y="165" width="2" height="2" fill="#3535ff"/><rect x="332" y="305" width="2" height="2" fill="#3535ff"/><rect x="160" y="197" width="2" height="2" fill="#3535ff"/><rect x="182" y="133" width="2" height="2" fill="#3535ff"/><rect x="182" y="287" width="2" height="2" fill="#3535ff"/><rect x="370" y="227" width="2" height="2" fill="#3535ff"/><rect x="272" y="331" width="2" height="2" fill="#3535ff"/><rect x="172" y="123" width="2" height="2" fill="#3535ff"/><rect x="236" y="289" width="2" height="2" fill="#3535ff"/><rect x="328" y="143" width="2" height="2" fill="#3535ff"/><rect x="372" y="195" width="2" height="2" fill="#3535ff"/><rect x="168" y="147" width="2" height="2" fill="#3535ff"/><rect x="354" y="143" width="2" height="2" fill="#3535ff"/><rect x="250" y="313" width="2" height="2" fill="#3535ff"/><rect x="160" y="211" width="2" height="2" fill="#3535ff"/><rect x="372" y="175" width="2" height="2" fill="#3535ff"/><rect x="356" y="167" width="2" height="2" fill="#3535ff"/><rect x="160" y="175" width="2" height="2" fill="#3535ff"/><rect x="334" y="113" width="2" height="2" fill="#3535ff"/><rect x="336" y="101" width="2" height="2" fill="#3535ff"/><rect x="232" y="109" width="2" height="2" fill="#3535ff"/><rect x="236" y="109" width="2" height="2" fill="#3535ff"/><rect x="342" y="119" width="2" height="2" fill="#3535ff"/><rect x="374" y="221" width="2" height="2" fill="#3535ff"/><rect x="170" y="177" width="2" height="2" fill="#3535ff"/><rect x="172" y="227" width="2" height="2" fill="#3535ff"/><rect x="162" y="189" width="2" height="2" fill="#3535ff"/><rect x="284" y="81" width="2" height="2" fill="#3535ff"/><rect x="290" y="307" width="2" height="2" fill="#3535ff"/><rect x="186" y="247" width="2" height="2" fill="#3535ff"/><rect x="288" y="123" width="2" height="2" fill="#3535ff"/><rect x="164" y="213" width="2" height="2" fill="#3535ff"/><rect x="374" y="203" width="2" height="2" fill="#3535ff"/><rect x="164" y="149" width="2" height="2" fill="#3535ff"/><rect x="162" y="169" width="2" height="2" fill="#3535ff"/><rect x="288" y="289" width="2" height="2" fill="#3535ff"/><rect x="302" y="103" width="2" height="2" fill="#3535ff"/><rect x="298" y="97" width="2" height="2" fill="#3535ff"/><rect x="310" y="293" width="2" height="2" fill="#3535ff"/><rect x="374" y="211" width="2" height="2" fill="#3535ff"/><rect x="240" y="317" width="2" height="2" fill="#3535ff"/><rect x="322" y="95" width="2" height="2" fill="#3535ff"/><rect x="288" y="303" width="2" height="2" fill="#3535ff"/><rect x="374" y="221" width="2" height="2" fill="#3535ff"/><rect x="366" y="177" width="2" height="2" fill="#3535ff"/><rect x="222" y="289" width="2" height="2" fill="#3535ff"/><rect x="340" y="277" width="2" height="2" fill="#3535ff"/><rect x="186" y="121" width="2" height="2" fill="#3535ff"/><rect x="330" y="101" width="2" height="2" fill="#3535ff"/><rect x="208" y="97" width="2" height="2" fill="#3535ff"/><rect x="264" y="303" width="2" height="2" fill="#3535ff"/><rect x="370" y="153" width="2" height="2" fill="#3535ff"/><rect x="274" y="329" width="2" height="2" fill="#3535ff"/><rect x="346" y="133" width="2" height="2" fill="#3535ff"/><rect x="162" y="177" width="2" height="2" fill="#3535ff"/><rect x="170" y="157" width="2" height="2" fill="#3535ff"/><rect x="216" y="105" width="2" height="2" fill="#3535ff"/><rect x="376" y="237" width="2" height="2" fill="#3535ff"/><rect x="174" y="151" width="2" height="2" fill="#3535ff"/><rect x="162" y="203" width="2" height="2" fill="#3535ff"/><rect x="374" y="225" width="2" height="2" fill="#3535ff"/><rect x="328" y="307" width="2" height="2" fill="#3535ff"/><rect x="368" y="251" width="2" height="2" fill="#3535ff"/><rect x="270" y="85" width="2" height="2" fill="#3535ff"/><rect x="214" y="283" width="2" height="2" fill="#3535ff"/><rect x="302" y="103" width="2" height="2" fill="#3535ff"/><rect x="160" y="155" width="2" height="2" fill="#3535ff"/><rect x="226" y="297" width="2" height="2" fill="#3535ff"/><rect x="162" y="215" width="2" height="2" fill="#3535ff"/><rect x="254" y="105" width="2" height="2" fill="#3535ff"/><rect x="162" y="185" width="2" height="2" fill="#3535ff"/><rect x="370" y="235" width="2" height="2" fill="#3535ff"/><rect x="164" y="149" width="2" height="2" fill="#3535ff"/><rect x="178" y="127" width="2" height="2" fill="#3535ff"/><rect x="222" y="305" width="2" height="2" fill="#3535ff"/><rect x="206" y="101" width="2" height="2" fill="#3535ff"/><rect x="160" y="183" width="2" height="2" fill="#3535ff"/><rect x="340" y="135" width="2" height="2" fill="#3535ff"/><rect x="308" y="285" width="2" height="2" fill="#3535ff"/><rect x="372" y="239" width="2" height="2" fill="#3535ff"/><rect x="336" y="115" width="2" height="2" fill="#3535ff"/><rect x="226" y="121" width="2" height="2" fill="#3535ff"/><rect x="294" y="117" width="2" height="2" fill="#3535ff"/><rect x="238" y="305" width="2" height="2" fill="#3535ff"/><rect x="162" y="207" width="2" height="2" fill="#3535ff"/><rect x="300" y="283" width="2" height="2" fill="#3535ff"/><rect x="216" y="107" width="2" height="2" fill="#3535ff"/><rect x="372" y="181" width="2" height="2" fill="#3535ff"/><rect x="266" y="291" width="2" height="2" fill="#3535ff"/><rect x="230" y="317" width="2" height="2" fill="#3535ff"/><rect x="200" y="303" width="2" height="2" fill="#3535ff"/><rect x="162" y="173" width="2" height="2" fill="#3535ff"/><rect x="318" y="303" width="2" height="2" fill="#3535ff"/><rect x="324" y="295" width="2" height="2" fill="#3535ff"/><rect x="164" y="191" width="2" height="2" fill="#3535ff"/><rect x="362" y="261" width="2" height="2" fill="#3535ff"/><rect x="164" y="179" width="2" height="2" fill="#3535ff"/><rect x="210" y="127" width="2" height="2" fill="#3535ff"/><rect x="174" y="243" width="2" height="2" fill="#3535ff"/><rect x="188" y="105" width="2" height="2" fill="#3535ff"/><rect x="172" y="157" width="2" height="2" fill="#3535ff"/><rect x="172" y="233" width="2" height="2" fill="#3535ff"/><rect x="328" y="283" width="2" height="2" fill="#3535ff"/><rect x="162" y="179" width="2" height="2" fill="#3535ff"/><rect x="182" y="149" width="2" height="2" fill="#3535ff"/><rect x="240" y="105" width="2" height="2" fill="#3535ff"/><rect x="224" y="273" width="2" height="2" fill="#3535ff"/><rect x="174" y="253" width="2" height="2" fill="#3535ff"/><rect x="334" y="103" width="2" height="2" fill="#3535ff"/><rect x="214" y="109" width="2" height="2" fill="#3535ff"/><rect x="372" y="179" width="2" height="2" fill="#3535ff"/><rect x="314" y="299" width="2" height="2" fill="#3535ff"/><rect x="230" y="107" width="2" height="2" fill="#3535ff"/><rect x="372" y="203" width="2" height="2" fill="#3535ff"/><rect x="162" y="153" width="2" height="2" fill="#3535ff"/><rect x="352" y="161" width="2" height="2" fill="#3535ff"/><rect x="242" y="91" width="2" height="2" fill="#3535ff"/><rect x="354" y="267" width="2" height="2" fill="#3535ff"/><rect x="356" y="163" width="2" height="2" fill="#3535ff"/><rect x="170" y="249" width="2" height="2" fill="#3535ff"/><rect x="366" y="183" width="2" height="2" fill="#3535ff"/><rect x="186" y="125" width="2" height="2" fill="#3535ff"/><rect x="242" y="311" width="2" height="2" fill="#3535ff"/><rect x="282" y="315" width="2" height="2" fill="#3535ff"/><rect x="200" y="275" width="2" height="2" fill="#3535ff"/><rect x="208" y="97" width="2" height="2" fill="#3535ff"/><rect x="178" y="141" width="2" height="2" fill="#3535ff"/><rect x="178" y="239" width="2" height="2" fill="#3535ff"/><rect x="372" y="233" width="2" height="2" fill="#3535ff"/><rect x="210" y="109" width="2" height="2" fill="#3535ff"/><rect x="362" y="141" width="2" height="2" fill="#3535ff"/><rect x="342" y="145" width="2" height="2" fill="#3535ff"/><rect x="320" y="121" width="2" height="2" fill="#3535ff"/><rect x="296" y="101" width="2" height="2" fill="#3535ff"/><rect x="286" y="315" width="2" height="2" fill="#3535ff"/><rect x="340" y="99" width="2" height="2" fill="#3535ff"/><rect x="342" y="283" width="2" height="2" fill="#3535ff"/><rect x="248" y="315" width="2" height="2" fill="#3535ff"/><rect x="236" y="89" width="2" height="2" fill="#3535ff"/><rect x="260" y="309" width="2" height="2" fill="#3535ff"/><rect x="160" y="189" width="2" height="2" fill="#3535ff"/><rect x="164" y="219" width="2" height="2" fill="#3535ff"/><rect x="210" y="99" width="2" height="2" fill="#3535ff"/><rect x="162" y="229" width="2" height="2" fill="#3535ff"/><rect x="306" y="109" width="2" height="2" fill="#3535ff"/><rect x="234" y="93" width="2" height="2" fill="#3535ff"/><rect x="346" y="127" width="2" height="2" fill="#3535ff"/><rect x="288" y="113" width="2" height="2" fill="#3535ff"/><rect x="266" y="299" width="2" height="2" fill="#3535ff"/><rect x="212" y="103" width="2" height="2" fill="#3535ff"/><rect x="224" y="271" width="2" height="2" fill="#3535ff"/><rect x="318" y="281" width="2" height="2" fill="#3535ff"/><rect x="240" y="91" width="2" height="2" fill="#3535ff"/><rect x="366" y="251" width="2" height="2" fill="#3535ff"/><rect x="374" y="215" width="2" height="2" fill="#3535ff"/><rect x="328" y="283" width="2" height="2" fill="#3535ff"/><rect x="344" y="293" width="2" height="2" fill="#3535ff"/><rect x="172" y="259" width="2" height="2" fill="#3535ff"/><rect x="162" y="183" width="2" height="2" fill="#3535ff"/><rect x="322" y="101" width="2" height="2" fill="#3535ff"/><rect x="300" y="293" width="2" height="2" fill="#3535ff"/><rect x="300" y="317" width="2" height="2" fill="#3535ff"/><rect x="356" y="289" width="2" height="2" fill="#3535ff"/><rect x="172" y="243" width="2" height="2" fill="#3535ff"/><rect x="300" y="299" width="2" height="2" fill="#3535ff"/><rect x="356" y="279" width="2" height="2" fill="#3535ff"/><rect x="222" y="283" width="2" height="2" fill="#3535ff"/><rect x="176" y="241" width="2" height="2" fill="#3535ff"/><rect x="312" y="79" width="2" height="2" fill="#3535ff"/><rect x="282" y="91" width="2" height="2" fill="#3535ff"/><rect x="228" y="89" width="2" height="2" fill="#3535ff"/><rect x="286" y="313" width="2" height="2" fill="#3535ff"/><rect x="372" y="241" width="2" height="2" fill="#3535ff"/><rect x="372" y="193" width="2" height="2" fill="#3535ff"/><rect x="328" y="113" width="2" height="2" fill="#3535ff"/><rect x="244" y="307" width="2" height="2" fill="#3535ff"/><rect x="376" y="227" width="2" height="2" fill="#3535ff"/><rect x="164" y="167" width="2" height="2" fill="#3535ff"/><rect x="200" y="287" width="2" height="2" fill="#3535ff"/><rect x="168" y="139" width="2" height="2" fill="#3535ff"/><rect x="168" y="249" width="2" height="2" fill="#3535ff"/><rect x="372" y="167" width="2" height="2" fill="#3535ff"/></svg>
<div class="t" style="left:436px;width:400px;text-align:right;top:109px;font-size:12px;line-height:12px;color:#000;letter-spacing:0px;">-40</div>
<div class="t" style="left:436px;width:400px;text-align:right;top:155px;font-size:12px;line-height:12px;color:#000;letter-spacing:0px;">-60</div>
<div class="t" style="left:436px;width:400px;text-align:right;top:201px;font-size:12px;line-height:12px;color:#000;letter-spacing:0px;">-80</div>
<div class="t" style="left:436px;width:400px;text-align:right;top:247px;font-size:12px;line-height:12px;color:#000;letter-spacing:0px;">-100</div>
<div class="t" style="left:436px;width:400px;text-align:right;top:293px;font-size:12px;line-height:12px;color:#000;letter-spacing:0px;">-120</div>
<div class="t" style="left:436px;width:400px;text-align:right;top:339px;font-size:12px;line-height:12px;color:#000;letter-spacing:0px;">-140</div>
<div class="t" style="left:436px;width:400px;text-align:right;top:385px;font-size:12px;line-height:12px;color:#000;letter-spacing:0px;">-160</div>
<div class="t" style="left:436px;width:400px;text-align:right;top:431px;font-size:12px;line-height:12px;color:#000;letter-spacing:0px;">-180</div>
<div class="t" style="left:436px;width:400px;text-align:right;top:478px;font-size:12px;line-height:12px;color:#000;letter-spacing:0px;">-200</div>
<div class="t" style="left:638px;width:400px;text-align:center;top:491px;font-size:12px;line-height:12px;color:#000;letter-spacing:0px;">-80k</div>
<div class="t" style="left:705px;width:400px;text-align:center;top:491px;font-size:12px;line-height:12px;color:#000;letter-spacing:0px;">-60k</div>
<div class="t" style="left:772px;width:400px;text-align:center;top:491px;font-size:12px;line-height:12px;color:#000;letter-spacing:0px;">-40k</div>
<div class="t" style="left:839px;width:400px;text-align:center;top:491px;font-size:12px;line-height:12px;color:#000;letter-spacing:0px;">-20k</div>
<div class="t" style="left:906px;width:400px;text-align:center;top:491px;font-size:12px;line-height:12px;color:#000;letter-spacing:0px;">0</div>
<div class="t" style="left:972px;width:400px;text-align:center;top:491px;font-size:12px;line-height:12px;color:#000;letter-spacing:0px;">20k</div>
<div class="t" style="left:1039px;width:400px;text-align:center;top:491px;font-size:12px;line-height:12px;color:#000;letter-spacing:0px;">40k</div>
<div class="t" style="left:1106px;width:400px;text-align:center;top:491px;font-size:12px;line-height:12px;color:#000;letter-spacing:0px;">60k</div>
<div class="t" style="left:1173px;width:400px;text-align:center;top:491px;font-size:12px;line-height:12px;color:#000;letter-spacing:0px;">80k</div>
<div class="t" style="left:907px;width:400px;text-align:center;top:511px;font-size:12px;line-height:12px;color:#000;font-weight:bold;">Ch1</div>
<div class="t" style="left:696px;top:292.0px;width:200px;text-align:center;font-size:12px;line-height:12px;font-weight:bold;letter-spacing:0px;transform:rotate(-90deg);color:#000">Ch2</div>
<div class="a" style="left:1384px;top:79px;width:187px;height:450px;background:#f2f1f0;border-left:1px solid #cbc7c2;"></div>
<div class="a chk" style="left:1389px;top:86px;"></div>
<div class="t" style="left:1410px;top:86px;font-size:14px;line-height:14px;color:#3c3c3c;letter-spacing:0.35px;">Persistence</div>
<div class="t" style="left:1387px;top:107px;font-size:14px;line-height:14px;color:#aaa59f;letter-spacing:0.35px;">Analog Alpha: 0.0994</div>
<div class="a" style="left:1389px;top:133px;width:177px;height:5px;border-radius:3px;background:linear-gradient(#bfbbb6 0,#bfbbb6 1px,#dedbd7 1px,#dedbd7 4px,#f7f6f5 4px);box-sizing:border-box"></div>
<div class="a" style="left:1389px;top:133px;width:86px;height:5px;border-radius:3px;background:linear-gradient(#dc6235 0,#dc6235 1px,#f2966f 1px,#f2966f 3px,#e06a3c 3px);box-sizing:border-box"></div>
<svg class="a" style="left:1470px;top:126px" width="14" height="22"><path d="M1.5 6 A5 5 0 0 1 11.5 6 L11.5 14.5 L6.5 19.5 L1.5 14.5 Z" fill="#e9e8e7" stroke="#b9b5b1" stroke-width="1"/><path d="M4.5 7.5 H8.5 M4.5 9.5 H8.5 M4.5 11.5 H8.5" stroke="#a9a49e" stroke-width="0.8"/></svg>
<div class="a" style="left:1387px;top:161px;width:181px;height:151px;border:1px solid #d9d5d0;border-radius:4px;box-sizing:border-box;"></div>
<div class="t" style="left:1391px;top:153px;font-size:14px;line-height:14px;color:#4e4a46;font-weight:bold;letter-spacing:0.45px;"><span style="background:#f2f1f0;padding-right:2px">Axes Options</span></div>
<div class="t" style="left:1391px;top:176px;font-size:14px;line-height:14px;color:#3c3c3c;letter-spacing:0.1px;">X/Div:</div>
<div class="a btn dis" style="left:1523px;top:170px;width:18px;height:26px;line-height:24px;font-size:14px;letter-spacing:0.1px">+</div>
<div class="a btn dis" style="left:1543px;top:170px;width:20px;height:26px;line-height:24px;font-size:14px;letter-spacing:0.1px">-</div>
<div class="t" style="left:1391px;top:205px;font-size:14px;line-height:14px;color:#3c3c3c;letter-spacing:0.1px;">Y/Div:</div>
<div class="a btn dis" style="left:1523px;top:199px;width:18px;height:26px;line-height:24px;font-size:14px;letter-spacing:0.1px">+</div>
<div class="a btn dis" style="left:1543px;top:199px;width:20px;height:26px;line-height:24px;font-size:14px;letter-spacing:0.1px">-</div>
<div class="t" style="left:1391px;top:234px;font-size:14px;line-height:14px;color:#3c3c3c;letter-spacing:0.1px;">X Off:</div>
<div class="a btn dis" style="left:1523px;top:228px;width:18px;height:26px;line-height:24px;font-size:14px;letter-spacing:0.1px">+</div>
<div class="a btn dis" style="left:1543px;top:228px;width:20px;height:26px;line-height:24px;font-size:14px;letter-spacing:0.1px">-</div>
<div class="t" style="left:1391px;top:263px;font-size:14px;line-height:14px;color:#3c3c3c;letter-spacing:0.1px;">Y Off:</div>
<div class="a btn dis" style="left:1523px;top:257px;width:18px;height:26px;line-height:24px;font-size:14px;letter-spacing:0.1px">+</div>
<div class="a btn dis" style="left:1543px;top:257px;width:20px;height:26px;line-height:24px;font-size:14px;letter-spacing:0.1px">-</div>
<div class="a chk on" style="left:1394px;top:289px;"><svg width="18" height="16" style="position:absolute;left:-1px;top:-3px;overflow:visible"><path d="M3.1 7 L7.3 11.2 L15.9 2.6" stroke="#fff" stroke-opacity="0.45" stroke-width="3.6" fill="none"/><path d="M3.1 7 L7.3 11.2 L15.9 2.6" stroke="#7b3b22" stroke-width="2.4" fill="none"/></svg></div>
<div class="a" style="left:1413px;top:285px;width:76px;height:21px;background:#f6ded3;border:1px solid #f0885a;border-radius:3px;"></div>
<div class="t" style="left:1416px;top:289px;font-size:14px;line-height:14px;color:#3c3c3c;letter-spacing:0.2px;">Autorange</div>
<div class="a" style="left:1387px;top:326px;width:181px;height:168px;border:1px solid #d9d5d0;border-radius:4px;box-sizing:border-box;"></div>
<div class="t" style="left:1391px;top:317px;font-size:14px;line-height:14px;color:#4e4a46;font-weight:bold;letter-spacing:0.45px;"><span style="background:#f2f1f0;padding-right:2px">Channel Options</span></div>
<div class="a" style="left:1391px;top:365px;width:174px;height:125px;border:1px solid #c8c4bf;border-radius:3px;background:#f2f1f0;"></div>
<div class="a tabun" style="left:1407px;top:335px;width:49px;height:30px;"></div>
<div class="t" style="left:1423px;top:344px;font-size:14px;line-height:14px;color:#5e5a55;letter-spacing:0.25px;">Ch4</div>
<div class="a tabun" style="left:1456px;top:335px;width:50px;height:30px;"></div>
<div class="t" style="left:1473px;top:344px;font-size:14px;line-height:14px;color:#5e5a55;letter-spacing:0.25px;">Trig</div>
<div class="a tabsel" style="left:1506px;top:333px;width:43px;height:33px;"></div>
<div class="t" style="left:1523px;top:344px;font-size:14px;line-height:14px;color:#3c3c3c;letter-spacing:0.25px;">XY</div>
<svg class="a" style="left:1396px;top:344px" width="8" height="10"><path d="M6 1 L1 5 L6 9 Z" fill="#7a7570"/></svg>
<svg class="a" style="left:1554px;top:344px" width="8" height="10"><path d="M2 1 L7 5 L2 9 Z" fill="#c9c5c0"/></svg>
<div class="t" style="left:1394px;top:382px;font-size:14px;line-height:14px;color:#3c3c3c;letter-spacing:0.05px;">Channel X:</div>
<div class="a combo" style="left:1473px;top:376px;width:88px;height:26px;"><span class="ctext" style="line-height:24px">Ch 1</span><div class="csep"></div><div class="cup"></div><div class="cdn"></div></div>
<div class="t" style="left:1394px;top:420px;font-size:14px;line-height:14px;color:#3c3c3c;letter-spacing:0.05px;">Channel Y:</div>
<div class="a combo" style="left:1473px;top:414px;width:88px;height:26px;"><span class="ctext" style="line-height:24px">Ch 2</span><div class="csep"></div><div class="cup"></div><div class="cdn"></div></div>
<div class="t" style="left:1394px;top:458px;font-size:14px;line-height:14px;color:#3c3c3c;letter-spacing:0.05px;">Marker:</div>
<div class="a combo" style="left:1473px;top:452px;width:88px;height:26px;"><span class="ctext" style="line-height:24px">Dot Med</span><div class="csep"></div><div class="cup"></div><div class="cdn"></div></div>
<div class="a btn" style="left:1388px;top:499px;width:180px;height:27px;line-height:25px;font-size:14px;letter-spacing:0.1px">Stop</div>
<div class="a" style="left:783px;top:535px;width:789px;height:452px;border:1px solid #000;background:#fef7fe;"></div>
<div class="t" style="left:883px;width:400px;text-align:center;top:545px;font-size:17px;line-height:17px;color:#000;font-weight:bold;letter-spacing:0.45px;">Scope Plot</div>
<div class="a" style="left:1355px;top:544px;width:19px;height:19px;background:#4b4bff;"></div>
<div class="t" style="left:1165px;width:400px;text-align:center;top:548px;font-size:11px;line-height:11px;color:#000;letter-spacing:0.2px;">XY</div>
<svg class="a" style="left:855px;top:570px" width="519" height="371"><line x1="65.5" y1="1" x2="65.5" y2="370" stroke="#a4a4a4" stroke-width="1" stroke-dasharray="4 4"/><line x1="130.5" y1="1" x2="130.5" y2="370" stroke="#a4a4a4" stroke-width="1" stroke-dasharray="4 4"/><line x1="195.5" y1="1" x2="195.5" y2="370" stroke="#a4a4a4" stroke-width="1" stroke-dasharray="4 4"/><line x1="260.5" y1="1" x2="260.5" y2="370" stroke="#a4a4a4" stroke-width="1" stroke-dasharray="4 4"/><line x1="324.5" y1="1" x2="324.5" y2="370" stroke="#a4a4a4" stroke-width="1" stroke-dasharray="4 4"/><line x1="389.5" y1="1" x2="389.5" y2="370" stroke="#a4a4a4" stroke-width="1" stroke-dasharray="4 4"/><line x1="454.5" y1="1" x2="454.5" y2="370" stroke="#a4a4a4" stroke-width="1" stroke-dasharray="4 4"/><line x1="1" y1="47.5" x2="518" y2="47.5" stroke="#a4a4a4" stroke-width="1" stroke-dasharray="4 4"/><line x1="1" y1="93.5" x2="518" y2="93.5" stroke="#a4a4a4" stroke-width="1" stroke-dasharray="4 4"/><line x1="1" y1="139.5" x2="518" y2="139.5" stroke="#a4a4a4" stroke-width="1" stroke-dasharray="4 4"/><line x1="1" y1="185.5" x2="518" y2="185.5" stroke="#a4a4a4" stroke-width="1" stroke-dasharray="4 4"/><line x1="1" y1="232.5" x2="518" y2="232.5" stroke="#a4a4a4" stroke-width="1" stroke-dasharray="4 4"/><line x1="1" y1="278.5" x2="518" y2="278.5" stroke="#a4a4a4" stroke-width="1" stroke-dasharray="4 4"/><line x1="1" y1="324.5" x2="518" y2="324.5" stroke="#a4a4a4" stroke-width="1" stroke-dasharray="4 4"/><rect x="0.5" y="0.5" width="518" height="370" fill="none" stroke="#000" stroke-width="1"/><rect x="260" y="186" width="2" height="2" fill="#3535ff"/></svg>
<div class="t" style="left:453px;width:400px;text-align:right;top:566px;font-size:12px;line-height:12px;color:#000;letter-spacing:0px;">-255.8</div>
<div class="t" style="left:453px;width:400px;text-align:right;top:612px;font-size:12px;line-height:12px;color:#000;letter-spacing:0px;">-255.85</div>
<div class="t" style="left:453px;width:400px;text-align:right;top:658px;font-size:12px;line-height:12px;color:#000;letter-spacing:0px;">-255.9</div>
<div class="t" style="left:453px;width:400px;text-align:right;top:704px;font-size:12px;line-height:12px;color:#000;letter-spacing:0px;">-255.95</div>
<div class="t" style="left:453px;width:400px;text-align:right;top:750px;font-size:12px;line-height:12px;color:#000;letter-spacing:0px;">-256</div>
<div class="t" style="left:453px;width:400px;text-align:right;top:796px;font-size:12px;line-height:12px;color:#000;letter-spacing:0px;">-256.05</div>
<div class="t" style="left:453px;width:400px;text-align:right;top:842px;font-size:12px;line-height:12px;color:#000;letter-spacing:0px;">-256.1</div>
<div class="t" style="left:453px;width:400px;text-align:right;top:888px;font-size:12px;line-height:12px;color:#000;letter-spacing:0px;">-256.15</div>
<div class="t" style="left:453px;width:400px;text-align:right;top:935px;font-size:12px;line-height:12px;color:#000;letter-spacing:0px;"></div>
<div class="t" style="left:655px;width:400px;text-align:center;top:948px;font-size:12px;line-height:12px;color:#000;letter-spacing:0px;"></div>
<div class="t" style="left:720px;width:400px;text-align:center;top:948px;font-size:12px;line-height:12px;color:#000;letter-spacing:0px;">-256.15</div>
<div class="t" style="left:785px;width:400px;text-align:center;top:948px;font-size:12px;line-height:12px;color:#000;letter-spacing:0px;">-256.1</div>
<div class="t" style="left:850px;width:400px;text-align:center;top:948px;font-size:12px;line-height:12px;color:#000;letter-spacing:0px;">-256.05</div>
<div class="t" style="left:914px;width:400px;text-align:center;top:948px;font-size:12px;line-height:12px;color:#000;letter-spacing:0px;">-256</div>
<div class="t" style="left:979px;width:400px;text-align:center;top:948px;font-size:12px;line-height:12px;color:#000;letter-spacing:0px;">-255.95</div>
<div class="t" style="left:1044px;width:400px;text-align:center;top:948px;font-size:12px;line-height:12px;color:#000;letter-spacing:0px;">-255.9</div>
<div class="t" style="left:1109px;width:400px;text-align:center;top:948px;font-size:12px;line-height:12px;color:#000;letter-spacing:0px;">-255.85</div>
<div class="t" style="left:1174px;width:400px;text-align:center;top:948px;font-size:12px;line-height:12px;color:#000;letter-spacing:0px;">-255.8</div>
<div class="t" style="left:915px;width:400px;text-align:center;top:968px;font-size:12px;line-height:12px;color:#000;font-weight:bold;">Ch1</div>
<div class="t" style="left:696px;top:749.0px;width:200px;text-align:center;font-size:12px;line-height:12px;font-weight:bold;letter-spacing:0px;transform:rotate(-90deg);color:#000">Ch2</div>
<div class="a" style="left:1384px;top:536px;width:187px;height:450px;background:#f2f1f0;border-left:1px solid #cbc7c2;"></div>
<div class="a chk" style="left:1389px;top:543px;"></div>
<div class="t" style="left:1410px;top:543px;font-size:14px;line-height:14px;color:#3c3c3c;letter-spacing:0.35px;">Persistence</div>
<div class="t" style="left:1387px;top:564px;font-size:14px;line-height:14px;color:#aaa59f;letter-spacing:0.35px;">Analog Alpha: 0.0994</div>
<div class="a" style="left:1389px;top:590px;width:177px;height:5px;border-radius:3px;background:linear-gradient(#bfbbb6 0,#bfbbb6 1px,#dedbd7 1px,#dedbd7 4px,#f7f6f5 4px);box-sizing:border-box"></div>
<div class="a" style="left:1389px;top:590px;width:86px;height:5px;border-radius:3px;background:linear-gradient(#dc6235 0,#dc6235 1px,#f2966f 1px,#f2966f 3px,#e06a3c 3px);box-sizing:border-box"></div>
<svg class="a" style="left:1470px;top:583px" width="14" height="22"><path d="M1.5 6 A5 5 0 0 1 11.5 6 L11.5 14.5 L6.5 19.5 L1.5 14.5 Z" fill="#e9e8e7" stroke="#b9b5b1" stroke-width="1"/><path d="M4.5 7.5 H8.5 M4.5 9.5 H8.5 M4.5 11.5 H8.5" stroke="#a9a49e" stroke-width="0.8"/></svg>
<div class="a" style="left:1387px;top:618px;width:181px;height:151px;border:1px solid #d9d5d0;border-radius:4px;box-sizing:border-box;"></div>
<div class="t" style="left:1391px;top:610px;font-size:14px;line-height:14px;color:#4e4a46;font-weight:bold;letter-spacing:0.45px;"><span style="background:#f2f1f0;padding-right:2px">Axes Options</span></div>
<div class="t" style="left:1391px;top:633px;font-size:14px;line-height:14px;color:#3c3c3c;letter-spacing:0.1px;">X/Div:</div>
<div class="a btn dis" style="left:1523px;top:627px;width:18px;height:26px;line-height:24px;font-size:14px;letter-spacing:0.1px">+</div>
<div class="a btn dis" style="left:1543px;top:627px;width:20px;height:26px;line-height:24px;font-size:14px;letter-spacing:0.1px">-</div>
<div class="t" style="left:1391px;top:662px;font-size:14px;line-height:14px;color:#3c3c3c;letter-spacing:0.1px;">Y/Div:</div>
<div class="a btn dis" style="left:1523px;top:656px;width:18px;height:26px;line-height:24px;font-size:14px;letter-spacing:0.1px">+</div>
<div class="a btn dis" style="left:1543px;top:656px;width:20px;height:26px;line-height:24px;font-size:14px;letter-spacing:0.1px">-</div>
<div class="t" style="left:1391px;top:691px;font-size:14px;line-height:14px;color:#3c3c3c;letter-spacing:0.1px;">X Off:</div>
<div class="a btn dis" style="left:1523px;top:685px;width:18px;height:26px;line-height:24px;font-size:14px;letter-spacing:0.1px">+</div>
<div class="a btn dis" style="left:1543px;top:685px;width:20px;height:26px;line-height:24px;font-size:14px;letter-spacing:0.1px">-</div>
<div class="t" style="left:1391px;top:720px;font-size:14px;line-height:14px;color:#3c3c3c;letter-spacing:0.1px;">Y Off:</div>
<div class="a btn dis" style="left:1523px;top:714px;width:18px;height:26px;line-height:24px;font-size:14px;letter-spacing:0.1px">+</div>
<div class="a btn dis" style="left:1543px;top:714px;width:20px;height:26px;line-height:24px;font-size:14px;letter-spacing:0.1px">-</div>
<div class="a chk on" style="left:1394px;top:746px;"><svg width="18" height="16" style="position:absolute;left:-1px;top:-3px;overflow:visible"><path d="M3.1 7 L7.3 11.2 L15.9 2.6" stroke="#fff" stroke-opacity="0.45" stroke-width="3.6" fill="none"/><path d="M3.1 7 L7.3 11.2 L15.9 2.6" stroke="#7b3b22" stroke-width="2.4" fill="none"/></svg></div>
<div class="t" style="left:1416px;top:746px;font-size:14px;line-height:14px;color:#3c3c3c;letter-spacing:0.2px;">Autorange</div>
<div class="a" style="left:1387px;top:783px;width:181px;height:168px;border:1px solid #d9d5d0;border-radius:4px;box-sizing:border-box;"></div>
<div class="t" style="left:1391px;top:774px;font-size:14px;line-height:14px;color:#4e4a46;font-weight:bold;letter-spacing:0.45px;"><span style="background:#f2f1f0;padding-right:2px">Channel Options</span></div>
<div class="a" style="left:1391px;top:822px;width:174px;height:125px;border:1px solid #c8c4bf;border-radius:3px;background:#f2f1f0;"></div>
<div class="a tabun" style="left:1391px;top:792px;width:42px;height:30px;"></div>
<div class="t" style="left:1401px;top:801px;font-size:14px;line-height:14px;color:#5e5a55;letter-spacing:0.25px;">Ch1</div>
<div class="a tabun" style="left:1433px;top:792px;width:42px;height:30px;"></div>
<div class="t" style="left:1443px;top:801px;font-size:14px;line-height:14px;color:#5e5a55;letter-spacing:0.25px;">Ch2</div>
<div class="a tabun" style="left:1475px;top:792px;width:42px;height:30px;"></div>
<div class="t" style="left:1486px;top:801px;font-size:14px;line-height:14px;color:#5e5a55;letter-spacing:0.25px;">Trig</div>
<div class="a tabsel" style="left:1517px;top:790px;width:35px;height:33px;"></div>
<div class="t" style="left:1526px;top:801px;font-size:14px;line-height:14px;color:#3c3c3c;letter-spacing:0.25px;">XY</div>
<div class="t" style="left:1394px;top:839px;font-size:14px;line-height:14px;color:#3c3c3c;letter-spacing:0.05px;">Channel X:</div>
<div class="a combo" style="left:1473px;top:833px;width:88px;height:26px;"><span class="ctext" style="line-height:24px">Ch 1</span><div class="csep"></div><div class="cup"></div><div class="cdn"></div></div>
<div class="t" style="left:1394px;top:877px;font-size:14px;line-height:14px;color:#3c3c3c;letter-spacing:0.05px;">Channel Y:</div>
<div class="a combo" style="left:1473px;top:871px;width:88px;height:26px;"><span class="ctext" style="line-height:24px">Ch 2</span><div class="csep"></div><div class="cup"></div><div class="cdn"></div></div>
<div class="t" style="left:1394px;top:915px;font-size:14px;line-height:14px;color:#3c3c3c;letter-spacing:0.05px;">Marker:</div>
<div class="a combo" style="left:1473px;top:909px;width:88px;height:26px;"><span class="ctext" style="line-height:24px">Dot Med</span><div class="csep"></div><div class="cup"></div><div class="cdn"></div></div>
<div class="a btn" style="left:1388px;top:956px;width:180px;height:27px;line-height:25px;font-size:14px;letter-spacing:0.1px">Stop</div>
</body></html>
